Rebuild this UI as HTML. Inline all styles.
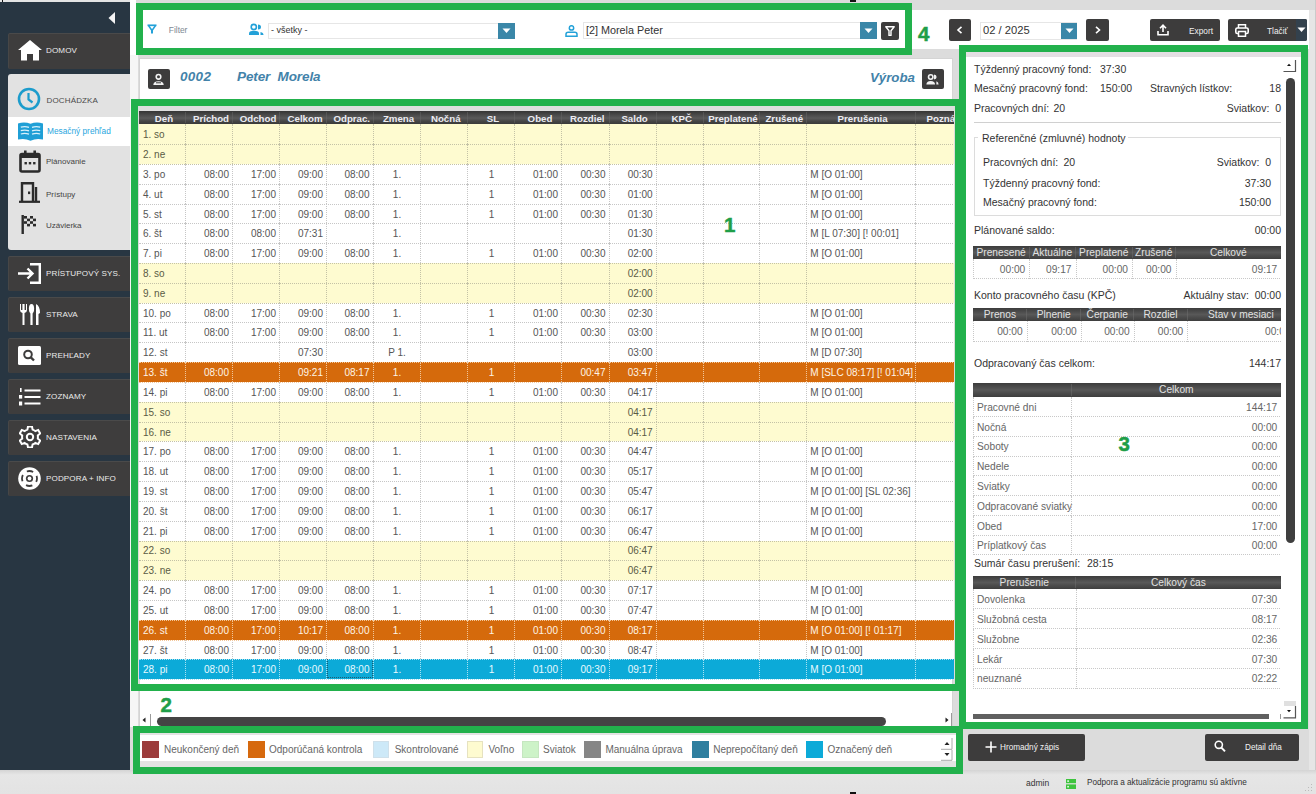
<!DOCTYPE html>
<html><head><meta charset="utf-8"><title>Dochádzka</title>
<style>
html,body{margin:0;padding:0;}
body{width:1316px;height:794px;overflow:hidden;position:relative;font-family:'Liberation Sans', sans-serif;background:#dcdcdc;}
div,svg{box-sizing:content-box;}
</style></head><body>
<div style="position:absolute;left:0;top:0;width:1316px;height:794px;background:#dcdcdc"></div>
<div style="position:absolute;left:130px;top:10px;width:1179px;height:39px;background:#fff"></div>
<div style="position:absolute;left:130px;top:0px;width:6px;height:58px;background:#fff"></div>
<div style="position:absolute;left:1309px;top:10px;width:6px;height:760px;background:#e6e6e6"></div>
<div style="position:absolute;left:1315px;top:0px;width:1px;height:770px;background:#cbcbcb"></div>
<div style="position:absolute;left:0px;top:0px;width:130px;height:2px;background:#e4e4e4"></div>
<div style="position:absolute;left:0px;top:0px;width:3px;height:3px;border-right:1px solid #111;border-bottom:1px solid #111;box-sizing:border-box"></div>
<div style="position:absolute;left:0px;top:2px;width:130px;height:768px;background:#283642"></div>
<svg style="position:absolute;left:108px;top:12px" width="8" height="12"><path d="M7 0 L7 12 L0.5 6 Z" fill="#f4f4f4"/></svg>
<div style="position:absolute;left:8px;top:33px;width:122px;height:36px;background:#3e3d3d;border-top:1px solid #4a4a4a;border-left:1px solid #474747;box-sizing:border-box;border-radius:2px 0 0 2px"></div>
<svg style="position:absolute;left:18px;top:40px" width="24" height="21" viewBox="0 0 24 21"><path d="M12 0 L24 10 L21 10 L21 20.5 L15 20.5 L15 14 L9 14 L9 20.5 L3 20.5 L3 10 L0 10 Z" fill="#fff"/></svg>
<div style="position:absolute;top:47.34px;font-size:8.1px;line-height:8.1px;color:#ebebeb;white-space:nowrap;left:46px;letter-spacing:0.1px">DOMOV</div>
<div style="position:absolute;left:8px;top:74px;width:122px;height:176px;background:#e2e2e2;border-radius:3px 0 0 3px"></div>
<div style="position:absolute;left:8px;top:117px;width:122px;height:29px;background:#ffffff"></div>
<svg style="position:absolute;left:17px;top:87px" width="24" height="24" viewBox="0 0 24 24"><circle cx="12" cy="12" r="10" fill="none" stroke="#1c9ccc" stroke-width="2.6"/><path d="M11.5 6 L11.5 12.5 L15.5 15.5" fill="none" stroke="#1c9ccc" stroke-width="2.2"/></svg>
<div style="position:absolute;top:96.83px;font-size:8px;line-height:8px;color:#4a4a4a;white-space:nowrap;left:46.5px;letter-spacing:0.15px">DOCHÁDZKA</div>
<svg style="position:absolute;left:18px;top:122px" width="25" height="19" viewBox="0 0 25 19"><path d="M0 1.5 Q6.5 -0.6 12.5 1.8 Q18.5 -0.6 25 1.5 L25 17.6 Q18.5 15.8 12.5 18.8 Q6.5 15.8 0 17.6 Z" fill="#1f9fd6"/><path d="M2.8 5.2 Q7 4 11 5.4 M2.8 8.6 Q7 7.4 11 8.8 M2.8 12 Q7 10.8 11 12.2 M14 5.4 Q18 4 22.2 5.2 M14 8.8 Q18 7.4 22.2 8.6 M14 12.2 Q18 10.8 22.2 12" stroke="#d9f1fb" stroke-width="1.3" fill="none"/></svg>
<div style="position:absolute;top:126.97px;font-size:8.3px;line-height:8.3px;color:#2aa6de;white-space:nowrap;left:47px;">Mesačný prehľad</div>
<svg style="position:absolute;left:19px;top:150px" width="22" height="23" viewBox="0 0 22 23"><rect x="1.5" y="4" width="19" height="17.5" rx="1.5" fill="none" stroke="#2b2b2b" stroke-width="2.6"/><rect x="1.5" y="4" width="19" height="4" fill="#2b2b2b"/><rect x="5" y="0.5" width="2.6" height="5" fill="#2b2b2b"/><rect x="14.4" y="0.5" width="2.6" height="5" fill="#2b2b2b"/><rect x="5.5" y="12" width="2.4" height="2.4" fill="#2b2b2b"/><rect x="9.8" y="12" width="2.4" height="2.4" fill="#2b2b2b"/><rect x="14.1" y="12" width="2.4" height="2.4" fill="#2b2b2b"/></svg>
<div style="position:absolute;top:158.23px;font-size:8px;line-height:8px;color:#444;white-space:nowrap;left:46px;">Plánovanie</div>
<svg style="position:absolute;left:19px;top:182px" width="22" height="21" viewBox="0 0 22 21"><path d="M3 20 L3 1.3 L14 1.3 L14 20" fill="none" stroke="#2b2b2b" stroke-width="2.4"/><path d="M17 5 L17 20" stroke="#2b2b2b" stroke-width="2.4"/><path d="M0 19.8 L21 19.8" stroke="#2b2b2b" stroke-width="2.2"/><rect x="9" y="9.5" width="2.2" height="2.6" fill="#2b2b2b"/></svg>
<div style="position:absolute;top:191.23px;font-size:8px;line-height:8px;color:#444;white-space:nowrap;left:46px;">Prístupy</div>
<svg style="position:absolute;left:21px;top:215px" width="17" height="19" viewBox="0 0 17 19"><rect x="0.5" y="0" width="2.4" height="19" fill="#2b2b2b"/><g fill="#2b2b2b"><rect x="3" y="1" width="3" height="2.6"/><rect x="9" y="1" width="3" height="2.6"/><rect x="6" y="3.6" width="3" height="2.6"/><rect x="12" y="3.6" width="3" height="2.6"/><rect x="3" y="6.2" width="3" height="2.6"/><rect x="9" y="6.2" width="3" height="2.6"/><rect x="6" y="8.8" width="3" height="2.6"/><rect x="12" y="8.8" width="3" height="2.6"/></g></svg>
<div style="position:absolute;top:222.23px;font-size:8px;line-height:8px;color:#444;white-space:nowrap;left:46px;">Uzávierka</div>
<div style="position:absolute;left:8px;top:256px;width:122px;height:35px;background:#3e3d3d;border-top:1px solid #4a4a4a;border-left:1px solid #474747;box-sizing:border-box;border-radius:2px 0 0 2px"></div>
<svg style="position:absolute;left:18px;top:263px" width="24" height="21" viewBox="0 0 24 21"><path d="M12 1.2 L21.8 1.2 L21.8 19.8 L12 19.8" fill="none" stroke="#fff" stroke-width="2.4"/><path d="M0 10.5 L14 10.5 M9.5 5.5 L14.5 10.5 L9.5 15.5" fill="none" stroke="#fff" stroke-width="2.4"/></svg>
<div style="position:absolute;top:269.84px;font-size:8.1px;line-height:8.1px;color:#ebebeb;white-space:nowrap;left:46px;letter-spacing:0.1px">PRÍSTUPOVÝ SYS.</div>
<div style="position:absolute;left:8px;top:297px;width:122px;height:35px;background:#3e3d3d;border-top:1px solid #4a4a4a;border-left:1px solid #474747;box-sizing:border-box;border-radius:2px 0 0 2px"></div>
<svg style="position:absolute;left:19px;top:304px" width="22" height="21" viewBox="0 0 22 21"><path d="M1 0 L1 6 Q1 8.5 3.5 9 L3.5 21 L5.5 21 L5.5 9 Q8 8.5 8 6 L8 0 L7 0 L7 6 L5.6 6 L5.6 0 L3.4 0 L3.4 6 L2 6 L2 0 Z" fill="#fff"/><ellipse cx="12.5" cy="4.8" rx="2.6" ry="4.8" fill="#fff"/><rect x="11.4" y="8" width="2.2" height="13" fill="#fff"/><path d="M17 0 Q21 2 21 9 L19.5 10 L19.5 21 L17 21 Z" fill="#fff"/></svg>
<div style="position:absolute;top:310.84px;font-size:8.1px;line-height:8.1px;color:#ebebeb;white-space:nowrap;left:46px;letter-spacing:0.1px">STRAVA</div>
<div style="position:absolute;left:8px;top:338px;width:122px;height:35px;background:#3e3d3d;border-top:1px solid #4a4a4a;border-left:1px solid #474747;box-sizing:border-box;border-radius:2px 0 0 2px"></div>
<svg style="position:absolute;left:18px;top:346px" width="23" height="19" viewBox="0 0 23 19"><rect x="0" y="0" width="23" height="19" rx="1.5" fill="#fff"/><circle cx="10" cy="8.5" r="3.8" fill="none" stroke="#3e3d3d" stroke-width="2"/><path d="M12.8 11.3 L16 14.5" stroke="#3e3d3d" stroke-width="2.4"/></svg>
<div style="position:absolute;top:351.84px;font-size:8.1px;line-height:8.1px;color:#ebebeb;white-space:nowrap;left:46px;letter-spacing:0.1px">PREHĽADY</div>
<div style="position:absolute;left:8px;top:379px;width:122px;height:35px;background:#3e3d3d;border-top:1px solid #4a4a4a;border-left:1px solid #474747;box-sizing:border-box;border-radius:2px 0 0 2px"></div>
<svg style="position:absolute;left:19px;top:388px" width="22" height="18" viewBox="0 0 22 18"><g fill="#fff"><rect x="5.5" y="1.5" width="16" height="2"/><rect x="5.5" y="8" width="16" height="2"/><rect x="5.5" y="14.5" width="16" height="2"/><rect x="1" y="0" width="1.6" height="4"/><rect x="0" y="7" width="3.2" height="3.6"/><rect x="0" y="13.5" width="3.2" height="4"/></g></svg>
<div style="position:absolute;top:392.84px;font-size:8.1px;line-height:8.1px;color:#ebebeb;white-space:nowrap;left:46px;letter-spacing:0.1px">ZOZNAMY</div>
<div style="position:absolute;left:8px;top:420px;width:122px;height:35px;background:#3e3d3d;border-top:1px solid #4a4a4a;border-left:1px solid #474747;box-sizing:border-box;border-radius:2px 0 0 2px"></div>
<svg style="position:absolute;left:19px;top:426px" width="22" height="22" viewBox="0 0 22 22"><g transform="translate(11 11)"><path d="M-2 -10.5 L2 -10.5 L2.6 -7.4 Q4.2 -6.8 5.3 -5.9 L8.2 -7.1 L10.2 -3.6 L7.8 -1.6 Q8 0 7.8 1.6 L10.2 3.6 L8.2 7.1 L5.3 5.9 Q4.2 6.8 2.6 7.4 L2 10.5 L-2 10.5 L-2.6 7.4 Q-4.2 6.8 -5.3 5.9 L-8.2 7.1 L-10.2 3.6 L-7.8 1.6 Q-8 0 -7.8 -1.6 L-10.2 -3.6 L-8.2 -7.1 L-5.3 -5.9 Q-4.2 -6.8 -2.6 -7.4 Z" fill="none" stroke="#fff" stroke-width="2"/><circle r="3.2" fill="none" stroke="#fff" stroke-width="2"/></g></svg>
<div style="position:absolute;top:433.84px;font-size:8.1px;line-height:8.1px;color:#ebebeb;white-space:nowrap;left:46px;letter-spacing:0.1px">NASTAVENIA</div>
<div style="position:absolute;left:8px;top:461px;width:122px;height:35px;background:#3e3d3d;border-top:1px solid #4a4a4a;border-left:1px solid #474747;box-sizing:border-box;border-radius:2px 0 0 2px"></div>
<svg style="position:absolute;left:18px;top:467px" width="23" height="23" viewBox="0 0 23 23"><circle cx="11.5" cy="11.5" r="11.3" fill="#fff"/><circle cx="11.5" cy="11.5" r="7.5" fill="none" stroke="#3e3d3d" stroke-width="1.8" stroke-dasharray="6.5 5.3" stroke-dashoffset="3"/><circle cx="11.5" cy="11.5" r="3.6" fill="#3e3d3d"/><circle cx="11.5" cy="11.5" r="1.9" fill="#fff"/></svg>
<div style="position:absolute;top:474.84px;font-size:8.1px;line-height:8.1px;color:#ebebeb;white-space:nowrap;left:46px;letter-spacing:0.1px">PODPORA + INFO</div>
<svg style="position:absolute;left:147px;top:24px" width="10" height="10" viewBox="0 0 10 10"><path d="M0.5 1.3 L9.5 1.3" stroke="#23a1d8" stroke-width="1.7"/><path d="M1.5 1.5 L4.2 5.5 L5.8 5.5 L8.5 1.5" fill="none" stroke="#23a1d8" stroke-width="1.5"/><path d="M5 5 L5 9.5" stroke="#23a1d8" stroke-width="2"/></svg>
<div style="position:absolute;top:25.89px;font-size:8.4px;line-height:8.4px;color:#7d8893;white-space:nowrap;left:168.8px;">Filter</div>
<svg style="position:absolute;left:249px;top:23px" width="15" height="13" viewBox="0 0 15 13"><circle cx="4.8" cy="4" r="2.6" fill="none" stroke="#23a1d8" stroke-width="1.6"/><path d="M0 12 L0 10.5 Q0 8 3 8 L7 8 Q10 8 10 10.5 L10 12 Z" fill="#23a1d8"/><path d="M9 1.5 Q12 1.5 12 4 Q12 6.5 9 6.5 Z" fill="#23a1d8"/><path d="M11.5 9 Q14.5 9.5 14.5 12 L11.5 12 Z" fill="#23a1d8"/></svg>
<div style="position:absolute;left:268px;top:23px;width:247px;height:16px;background:#fff;border:1px solid #e6e6e6;box-sizing:border-box"></div>
<div style="position:absolute;top:26.38px;font-size:9px;line-height:9px;color:#333;white-space:nowrap;left:271px;">- všetky -</div>
<div style="position:absolute;left:498px;top:23px;width:17px;height:16px;background:#3a87a8"></div>
<svg style="position:absolute;left:502px;top:28px" width="9" height="6"><path d="M0.5 0.5 L8.5 0.5 L4.5 5 Z" fill="#fff"/></svg>
<svg style="position:absolute;left:565px;top:25px" width="13" height="12" viewBox="0 0 13 12"><circle cx="6.5" cy="2.9" r="2.2" fill="none" stroke="#23a1d8" stroke-width="1.5"/><path d="M1 11.2 L1 9.2 Q1 7.2 3.2 7.2 L9.8 7.2 Q12 7.2 12 9.2 L12 11.2 Z" fill="none" stroke="#23a1d8" stroke-width="1.5"/></svg>
<div style="position:absolute;left:583px;top:22px;width:294px;height:17px;background:#fff;border:1px solid #e6e6e6;box-sizing:border-box"></div>
<div style="position:absolute;top:25.46px;font-size:10.8px;line-height:10.8px;color:#333;white-space:nowrap;left:586px;">[2] Morela Peter</div>
<div style="position:absolute;left:860px;top:22px;width:17px;height:17px;background:#3a87a8"></div>
<svg style="position:absolute;left:864px;top:28px" width="9" height="6"><path d="M0.5 0.5 L8.5 0.5 L4.5 5 Z" fill="#fff"/></svg>
<div style="position:absolute;left:881px;top:22px;width:18px;height:18px;background:#3d3c3c;border-radius:2px"></div>
<svg style="position:absolute;left:885px;top:26px" width="10" height="10" viewBox="0 0 10 10"><path d="M0.8 0.8 L9.2 0.8 L6 4.8 L6 9.5 L4 9.5 L4 4.8 Z" fill="none" stroke="#fff" stroke-width="1.4" stroke-linejoin="round"/></svg>
<div style="position:absolute;left:949px;top:19px;width:22px;height:22px;background:#3d3c3c;border-radius:2px"></div>
<svg style="position:absolute;left:956px;top:26px" width="8" height="8"><path d="M5.5 0.8 L2 4 L5.5 7.2" fill="none" stroke="#fff" stroke-width="1.6"/></svg>
<div style="position:absolute;left:980px;top:22px;width:97px;height:18px;background:#fff;border:1px solid #e6e6e6;box-sizing:border-box"></div>
<div style="position:absolute;top:25.12px;font-size:11.2px;line-height:11.2px;color:#333;white-space:nowrap;left:983px;">02 / 2025</div>
<div style="position:absolute;left:1061px;top:22.5px;width:16px;height:16.5px;background:#3a87a8"></div>
<svg style="position:absolute;left:1065px;top:28px" width="9" height="6"><path d="M0.5 0.5 L8.5 0.5 L4.5 5 Z" fill="#fff"/></svg>
<div style="position:absolute;left:1086px;top:19px;width:22.5px;height:22px;background:#3d3c3c;border-radius:2px"></div>
<svg style="position:absolute;left:1094px;top:26px" width="8" height="8"><path d="M2 0.8 L5.5 4 L2 7.2" fill="none" stroke="#fff" stroke-width="1.6"/></svg>
<div style="position:absolute;left:1150px;top:19px;width:70px;height:22px;background:#3d3c3c;border-radius:2px"></div>
<svg style="position:absolute;left:1157px;top:24px" width="12" height="12" viewBox="0 0 12 12"><path d="M6 8 L6 1.5 M3 4.3 L6 1.2 L9 4.3" fill="none" stroke="#fff" stroke-width="1.6"/><path d="M1 7 L1 10.8 L11 10.8 L11 7" fill="none" stroke="#fff" stroke-width="1.6"/></svg>
<div style="position:absolute;top:26.97px;font-size:8.3px;line-height:8.3px;color:#f0f0f0;white-space:nowrap;left:1189px;">Export</div>
<div style="position:absolute;left:1228px;top:19px;width:79px;height:22px;background:#3d3c3c;border-radius:2px"></div>
<div style="position:absolute;left:1296px;top:19px;width:11px;height:22px;background:#33414d;border-radius:0 2px 2px 0"></div>
<svg style="position:absolute;left:1235px;top:24px" width="14" height="13" viewBox="0 0 14 13"><path d="M3.5 4 L3.5 0.8 L10.5 0.8 L10.5 4" fill="none" stroke="#fff" stroke-width="1.5"/><rect x="0.8" y="4" width="12.4" height="5.5" rx="1.5" fill="none" stroke="#fff" stroke-width="1.6"/><rect x="3.5" y="7.5" width="7" height="4.8" fill="#3d3c3c" stroke="#fff" stroke-width="1.5"/></svg>
<div style="position:absolute;top:26.97px;font-size:8.3px;line-height:8.3px;color:#f0f0f0;white-space:nowrap;left:1267px;">Tlačiť</div>
<svg style="position:absolute;left:1297px;top:27px" width="9" height="6"><path d="M0.5 0.5 L8.5 0.5 L4.5 5 Z" fill="#fff"/></svg>
<div style="position:absolute;left:139px;top:58px;width:814px;height:672px;background:#fff;border:1px solid #d4d4d4;box-sizing:border-box"></div>
<div style="position:absolute;left:130px;top:55px;width:8px;height:672px;background:#f6f6f6"></div>
<div style="position:absolute;left:148px;top:69px;width:22px;height:20px;background:#3d3c3c;border-radius:2px"></div>
<svg style="position:absolute;left:148px;top:69px" width="22" height="20" viewBox="0 0 22 20"><circle cx="10.5" cy="7.8" r="2.3" fill="none" stroke="#f2f2f2" stroke-width="1.6"/><path d="M5.3 16 Q5.3 12.2 10.5 12.2 Q15.7 12.2 15.7 16 Z" fill="#f2f2f2"/><rect x="8" y="13.3" width="5" height="1" fill="#3d3c3c"/></svg>
<div style="position:absolute;top:70.37px;font-size:13.5px;line-height:13.5px;color:#4282a9;white-space:nowrap;font-weight:bold;font-style:italic;left:180px;letter-spacing:0.3px">0002</div>
<div style="position:absolute;top:70.37px;font-size:13.5px;line-height:13.5px;color:#4282a9;white-space:nowrap;font-weight:bold;font-style:italic;left:237px;letter-spacing:-0.1px">Peter&nbsp;&nbsp;Morela</div>
<div style="position:absolute;top:70.54px;font-size:13.3px;line-height:13.3px;color:#4282a9;white-space:nowrap;font-weight:bold;font-style:italic;right:401px;">Výroba</div>
<div style="position:absolute;left:922px;top:69px;width:22px;height:20px;background:#3d3c3c;border-radius:2px"></div>
<svg style="position:absolute;left:922px;top:69px" width="22" height="20" viewBox="0 0 22 20"><circle cx="8.7" cy="8" r="2.2" fill="none" stroke="#f2f2f2" stroke-width="1.6"/><path d="M12 5.6 Q14.6 5.8 14.6 8 Q14.6 10.2 12 10.4 Z" fill="#f2f2f2"/><path d="M4.4 15.6 Q4.4 12 8.7 12 Q13 12 13 15.6 Z" fill="#f2f2f2"/><path d="M14.4 12.2 Q16.6 12.8 16.6 15.6 L14.4 15.6 Z" fill="#f2f2f2"/></svg>
<div style="position:absolute;left:137px;top:104px;width:817px;height:7px;background:#dedede"></div>
<div style="position:absolute;left:139px;top:0;width:814.5px;height:794px;overflow:hidden;z-index:2">
<div style="position:absolute;left:0px;top:111px;width:900px;height:13.299999999999997px;background:linear-gradient(to bottom,#353535 0%,#4d4d4d 35%,#5a5a5a 55%,#444 80%,#3a3a3a 100%)"></div>
<div style="position:absolute;left:1.5px;top:111.7px;width:47px;height:13.299999999999997px;line-height:13.299999999999997px;text-align:center;font-size:9.7px;font-weight:bold;color:#ececf2;white-space:nowrap;overflow:hidden">Deň</div>
<div style="position:absolute;left:46px;top:112px;width:1px;height:11.299999999999997px;background:#6a6a6a;opacity:0.45"></div>
<div style="position:absolute;left:48.5px;top:111.7px;width:47px;height:13.299999999999997px;line-height:13.299999999999997px;text-align:center;font-size:9.7px;font-weight:bold;color:#ececf2;white-space:nowrap;overflow:hidden">Príchod</div>
<div style="position:absolute;left:93px;top:112px;width:1px;height:11.299999999999997px;background:#6a6a6a;opacity:0.45"></div>
<div style="position:absolute;left:95.5px;top:111.7px;width:47px;height:13.299999999999997px;line-height:13.299999999999997px;text-align:center;font-size:9.7px;font-weight:bold;color:#ececf2;white-space:nowrap;overflow:hidden">Odchod</div>
<div style="position:absolute;left:140px;top:112px;width:1px;height:11.299999999999997px;background:#6a6a6a;opacity:0.45"></div>
<div style="position:absolute;left:142.5px;top:111.7px;width:47px;height:13.299999999999997px;line-height:13.299999999999997px;text-align:center;font-size:9.7px;font-weight:bold;color:#ececf2;white-space:nowrap;overflow:hidden">Celkom</div>
<div style="position:absolute;left:187px;top:112px;width:1px;height:11.299999999999997px;background:#6a6a6a;opacity:0.45"></div>
<div style="position:absolute;left:189.5px;top:111.7px;width:46.5px;height:13.299999999999997px;line-height:13.299999999999997px;text-align:center;font-size:9.7px;font-weight:bold;color:#ececf2;white-space:nowrap;overflow:hidden">Odprac.</div>
<div style="position:absolute;left:234px;top:112px;width:1px;height:11.299999999999997px;background:#6a6a6a;opacity:0.45"></div>
<div style="position:absolute;left:236.0px;top:111.7px;width:47.0px;height:13.299999999999997px;line-height:13.299999999999997px;text-align:center;font-size:9.7px;font-weight:bold;color:#ececf2;white-space:nowrap;overflow:hidden">Zmena</div>
<div style="position:absolute;left:281px;top:112px;width:1px;height:11.299999999999997px;background:#6a6a6a;opacity:0.45"></div>
<div style="position:absolute;left:283.0px;top:111.7px;width:47.5px;height:13.299999999999997px;line-height:13.299999999999997px;text-align:center;font-size:9.7px;font-weight:bold;color:#ececf2;white-space:nowrap;overflow:hidden">Nočná</div>
<div style="position:absolute;left:328px;top:112px;width:1px;height:11.299999999999997px;background:#6a6a6a;opacity:0.45"></div>
<div style="position:absolute;left:330.5px;top:111.7px;width:47px;height:13.299999999999997px;line-height:13.299999999999997px;text-align:center;font-size:9.7px;font-weight:bold;color:#ececf2;white-space:nowrap;overflow:hidden">SL</div>
<div style="position:absolute;left:375px;top:112px;width:1px;height:11.299999999999997px;background:#6a6a6a;opacity:0.45"></div>
<div style="position:absolute;left:377.5px;top:111.7px;width:47px;height:13.299999999999997px;line-height:13.299999999999997px;text-align:center;font-size:9.7px;font-weight:bold;color:#ececf2;white-space:nowrap;overflow:hidden">Obed</div>
<div style="position:absolute;left:422px;top:112px;width:1px;height:11.299999999999997px;background:#6a6a6a;opacity:0.45"></div>
<div style="position:absolute;left:424.5px;top:111.7px;width:47.5px;height:13.299999999999997px;line-height:13.299999999999997px;text-align:center;font-size:9.7px;font-weight:bold;color:#ececf2;white-space:nowrap;overflow:hidden">Rozdiel</div>
<div style="position:absolute;left:470px;top:112px;width:1px;height:11.299999999999997px;background:#6a6a6a;opacity:0.45"></div>
<div style="position:absolute;left:472.0px;top:111.7px;width:47.200000000000045px;height:13.299999999999997px;line-height:13.299999999999997px;text-align:center;font-size:9.7px;font-weight:bold;color:#ececf2;white-space:nowrap;overflow:hidden">Saldo</div>
<div style="position:absolute;left:517px;top:112px;width:1px;height:11.299999999999997px;background:#6a6a6a;opacity:0.45"></div>
<div style="position:absolute;left:519.2px;top:111.7px;width:47.0px;height:13.299999999999997px;line-height:13.299999999999997px;text-align:center;font-size:9.7px;font-weight:bold;color:#ececf2;white-space:nowrap;overflow:hidden">KPČ</div>
<div style="position:absolute;left:564px;top:112px;width:1px;height:11.299999999999997px;background:#6a6a6a;opacity:0.45"></div>
<div style="position:absolute;left:566.2px;top:111.7px;width:55.59999999999991px;height:13.299999999999997px;line-height:13.299999999999997px;text-align:center;font-size:9.7px;font-weight:bold;color:#ececf2;white-space:nowrap;overflow:hidden">Preplatené</div>
<div style="position:absolute;left:620px;top:112px;width:1px;height:11.299999999999997px;background:#6a6a6a;opacity:0.45"></div>
<div style="position:absolute;left:621.8px;top:111.7px;width:47.0px;height:13.299999999999997px;line-height:13.299999999999997px;text-align:center;font-size:9.7px;font-weight:bold;color:#ececf2;white-space:nowrap;overflow:hidden">Zrušené</div>
<div style="position:absolute;left:667px;top:112px;width:1px;height:11.299999999999997px;background:#6a6a6a;opacity:0.45"></div>
<div style="position:absolute;left:668.8px;top:111.7px;width:109.70000000000005px;height:13.299999999999997px;line-height:13.299999999999997px;text-align:center;font-size:9.7px;font-weight:bold;color:#ececf2;white-space:nowrap;overflow:hidden">Prerušenia</div>
<div style="position:absolute;left:776px;top:112px;width:1px;height:11.299999999999997px;background:#6a6a6a;opacity:0.45"></div>
<div style="position:absolute;left:778.5px;top:111.7px;width:66px;height:13.299999999999997px;line-height:13.299999999999997px;text-align:center;font-size:9.7px;font-weight:bold;color:#ececf2;white-space:nowrap;overflow:hidden">Poznámka</div>
<div style="position:absolute;left:0;top:124px;width:900px;height:20px;background:#fefbd0"></div>
<div style="position:absolute;left:4px;top:130.23px;font-size:10px;line-height:10px;color:#5b5b45;white-space:nowrap">1. so</div>
<div style="position:absolute;left:46px;top:124px;width:0;height:20px;border-left:1px dotted #c4c2a6"></div>
<div style="position:absolute;left:93px;top:124px;width:0;height:20px;border-left:1px dotted #c4c2a6"></div>
<div style="position:absolute;left:140px;top:124px;width:0;height:20px;border-left:1px dotted #c4c2a6"></div>
<div style="position:absolute;left:187px;top:124px;width:0;height:20px;border-left:1px dotted #c4c2a6"></div>
<div style="position:absolute;left:234px;top:124px;width:0;height:20px;border-left:1px dotted #c4c2a6"></div>
<div style="position:absolute;left:281px;top:124px;width:0;height:20px;border-left:1px dotted #c4c2a6"></div>
<div style="position:absolute;left:328px;top:124px;width:0;height:20px;border-left:1px dotted #c4c2a6"></div>
<div style="position:absolute;left:375px;top:124px;width:0;height:20px;border-left:1px dotted #c4c2a6"></div>
<div style="position:absolute;left:422px;top:124px;width:0;height:20px;border-left:1px dotted #c4c2a6"></div>
<div style="position:absolute;left:470px;top:124px;width:0;height:20px;border-left:1px dotted #c4c2a6"></div>
<div style="position:absolute;left:517px;top:124px;width:0;height:20px;border-left:1px dotted #c4c2a6"></div>
<div style="position:absolute;left:564px;top:124px;width:0;height:20px;border-left:1px dotted #c4c2a6"></div>
<div style="position:absolute;left:620px;top:124px;width:0;height:20px;border-left:1px dotted #c4c2a6"></div>
<div style="position:absolute;left:667px;top:124px;width:0;height:20px;border-left:1px dotted #c4c2a6"></div>
<div style="position:absolute;left:776px;top:124px;width:0;height:20px;border-left:1px dotted #c4c2a6"></div>
<div style="position:absolute;z-index:1;left:0;top:144px;width:900px;height:0;border-top:1px dotted #c4c2a6"></div>
<div style="position:absolute;left:0;top:144px;width:900px;height:20px;background:#fefbd0"></div>
<div style="position:absolute;left:4px;top:150.06px;font-size:10px;line-height:10px;color:#5b5b45;white-space:nowrap">2. ne</div>
<div style="position:absolute;left:46px;top:144px;width:0;height:20px;border-left:1px dotted #c4c2a6"></div>
<div style="position:absolute;left:93px;top:144px;width:0;height:20px;border-left:1px dotted #c4c2a6"></div>
<div style="position:absolute;left:140px;top:144px;width:0;height:20px;border-left:1px dotted #c4c2a6"></div>
<div style="position:absolute;left:187px;top:144px;width:0;height:20px;border-left:1px dotted #c4c2a6"></div>
<div style="position:absolute;left:234px;top:144px;width:0;height:20px;border-left:1px dotted #c4c2a6"></div>
<div style="position:absolute;left:281px;top:144px;width:0;height:20px;border-left:1px dotted #c4c2a6"></div>
<div style="position:absolute;left:328px;top:144px;width:0;height:20px;border-left:1px dotted #c4c2a6"></div>
<div style="position:absolute;left:375px;top:144px;width:0;height:20px;border-left:1px dotted #c4c2a6"></div>
<div style="position:absolute;left:422px;top:144px;width:0;height:20px;border-left:1px dotted #c4c2a6"></div>
<div style="position:absolute;left:470px;top:144px;width:0;height:20px;border-left:1px dotted #c4c2a6"></div>
<div style="position:absolute;left:517px;top:144px;width:0;height:20px;border-left:1px dotted #c4c2a6"></div>
<div style="position:absolute;left:564px;top:144px;width:0;height:20px;border-left:1px dotted #c4c2a6"></div>
<div style="position:absolute;left:620px;top:144px;width:0;height:20px;border-left:1px dotted #c4c2a6"></div>
<div style="position:absolute;left:667px;top:144px;width:0;height:20px;border-left:1px dotted #c4c2a6"></div>
<div style="position:absolute;left:776px;top:144px;width:0;height:20px;border-left:1px dotted #c4c2a6"></div>
<div style="position:absolute;z-index:1;left:0;top:164px;width:900px;height:0;border-top:1px dotted #c4c2a6"></div>
<div style="position:absolute;left:0;top:164px;width:900px;height:20px;background:#ffffff"></div>
<div style="position:absolute;left:4px;top:169.88px;font-size:10px;line-height:10px;color:#555555;white-space:nowrap">3. po</div>
<div style="position:absolute;left:46px;top:164px;width:0;height:20px;border-left:1px dotted #c6c6c6"></div>
<div style="position:absolute;left:47px;width:43px;text-align:right;top:169.88px;font-size:10px;line-height:10px;color:#555555;white-space:nowrap">08:00</div>
<div style="position:absolute;left:93px;top:164px;width:0;height:20px;border-left:1px dotted #c6c6c6"></div>
<div style="position:absolute;left:94px;width:43px;text-align:right;top:169.88px;font-size:10px;line-height:10px;color:#555555;white-space:nowrap">17:00</div>
<div style="position:absolute;left:140px;top:164px;width:0;height:20px;border-left:1px dotted #c6c6c6"></div>
<div style="position:absolute;left:141px;width:43px;text-align:right;top:169.88px;font-size:10px;line-height:10px;color:#555555;white-space:nowrap">09:00</div>
<div style="position:absolute;left:187px;top:164px;width:0;height:20px;border-left:1px dotted #c6c6c6"></div>
<div style="position:absolute;left:188px;width:42.5px;text-align:right;top:169.88px;font-size:10px;line-height:10px;color:#555555;white-space:nowrap">08:00</div>
<div style="position:absolute;left:234px;top:164px;width:0;height:20px;border-left:1px dotted #c6c6c6"></div>
<div style="position:absolute;left:234.5px;width:47.0px;text-align:center;top:169.88px;font-size:10px;line-height:10px;color:#555555;white-space:nowrap">1.</div>
<div style="position:absolute;left:281px;top:164px;width:0;height:20px;border-left:1px dotted #c6c6c6"></div>
<div style="position:absolute;left:328px;top:164px;width:0;height:20px;border-left:1px dotted #c6c6c6"></div>
<div style="position:absolute;left:329px;width:47px;text-align:center;top:169.88px;font-size:10px;line-height:10px;color:#555555;white-space:nowrap">1</div>
<div style="position:absolute;left:375px;top:164px;width:0;height:20px;border-left:1px dotted #c6c6c6"></div>
<div style="position:absolute;left:376px;width:43px;text-align:right;top:169.88px;font-size:10px;line-height:10px;color:#555555;white-space:nowrap">01:00</div>
<div style="position:absolute;left:422px;top:164px;width:0;height:20px;border-left:1px dotted #c6c6c6"></div>
<div style="position:absolute;left:423px;width:43.5px;text-align:right;top:169.88px;font-size:10px;line-height:10px;color:#555555;white-space:nowrap">00:30</div>
<div style="position:absolute;left:470px;top:164px;width:0;height:20px;border-left:1px dotted #c6c6c6"></div>
<div style="position:absolute;left:470.5px;width:43.200000000000045px;text-align:right;top:169.88px;font-size:10px;line-height:10px;color:#555555;white-space:nowrap">00:30</div>
<div style="position:absolute;left:517px;top:164px;width:0;height:20px;border-left:1px dotted #c6c6c6"></div>
<div style="position:absolute;left:564px;top:164px;width:0;height:20px;border-left:1px dotted #c6c6c6"></div>
<div style="position:absolute;left:620px;top:164px;width:0;height:20px;border-left:1px dotted #c6c6c6"></div>
<div style="position:absolute;left:667px;top:164px;width:0;height:20px;border-left:1px dotted #c6c6c6"></div>
<div style="position:absolute;left:671.3px;top:169.88px;font-size:10px;line-height:10px;color:#555555;white-space:nowrap">M [O 01:00]</div>
<div style="position:absolute;left:776px;top:164px;width:0;height:20px;border-left:1px dotted #c6c6c6"></div>
<div style="position:absolute;z-index:1;left:0;top:184px;width:900px;height:0;border-top:1px dotted #c6c6c6"></div>
<div style="position:absolute;left:0;top:184px;width:900px;height:20px;background:#ffffff"></div>
<div style="position:absolute;left:4px;top:189.69px;font-size:10px;line-height:10px;color:#555555;white-space:nowrap">4. ut</div>
<div style="position:absolute;left:46px;top:184px;width:0;height:20px;border-left:1px dotted #c6c6c6"></div>
<div style="position:absolute;left:47px;width:43px;text-align:right;top:189.69px;font-size:10px;line-height:10px;color:#555555;white-space:nowrap">08:00</div>
<div style="position:absolute;left:93px;top:184px;width:0;height:20px;border-left:1px dotted #c6c6c6"></div>
<div style="position:absolute;left:94px;width:43px;text-align:right;top:189.69px;font-size:10px;line-height:10px;color:#555555;white-space:nowrap">17:00</div>
<div style="position:absolute;left:140px;top:184px;width:0;height:20px;border-left:1px dotted #c6c6c6"></div>
<div style="position:absolute;left:141px;width:43px;text-align:right;top:189.69px;font-size:10px;line-height:10px;color:#555555;white-space:nowrap">09:00</div>
<div style="position:absolute;left:187px;top:184px;width:0;height:20px;border-left:1px dotted #c6c6c6"></div>
<div style="position:absolute;left:188px;width:42.5px;text-align:right;top:189.69px;font-size:10px;line-height:10px;color:#555555;white-space:nowrap">08:00</div>
<div style="position:absolute;left:234px;top:184px;width:0;height:20px;border-left:1px dotted #c6c6c6"></div>
<div style="position:absolute;left:234.5px;width:47.0px;text-align:center;top:189.69px;font-size:10px;line-height:10px;color:#555555;white-space:nowrap">1.</div>
<div style="position:absolute;left:281px;top:184px;width:0;height:20px;border-left:1px dotted #c6c6c6"></div>
<div style="position:absolute;left:328px;top:184px;width:0;height:20px;border-left:1px dotted #c6c6c6"></div>
<div style="position:absolute;left:329px;width:47px;text-align:center;top:189.69px;font-size:10px;line-height:10px;color:#555555;white-space:nowrap">1</div>
<div style="position:absolute;left:375px;top:184px;width:0;height:20px;border-left:1px dotted #c6c6c6"></div>
<div style="position:absolute;left:376px;width:43px;text-align:right;top:189.69px;font-size:10px;line-height:10px;color:#555555;white-space:nowrap">01:00</div>
<div style="position:absolute;left:422px;top:184px;width:0;height:20px;border-left:1px dotted #c6c6c6"></div>
<div style="position:absolute;left:423px;width:43.5px;text-align:right;top:189.69px;font-size:10px;line-height:10px;color:#555555;white-space:nowrap">00:30</div>
<div style="position:absolute;left:470px;top:184px;width:0;height:20px;border-left:1px dotted #c6c6c6"></div>
<div style="position:absolute;left:470.5px;width:43.200000000000045px;text-align:right;top:189.69px;font-size:10px;line-height:10px;color:#555555;white-space:nowrap">01:00</div>
<div style="position:absolute;left:517px;top:184px;width:0;height:20px;border-left:1px dotted #c6c6c6"></div>
<div style="position:absolute;left:564px;top:184px;width:0;height:20px;border-left:1px dotted #c6c6c6"></div>
<div style="position:absolute;left:620px;top:184px;width:0;height:20px;border-left:1px dotted #c6c6c6"></div>
<div style="position:absolute;left:667px;top:184px;width:0;height:20px;border-left:1px dotted #c6c6c6"></div>
<div style="position:absolute;left:671.3px;top:189.69px;font-size:10px;line-height:10px;color:#555555;white-space:nowrap">M [O 01:00]</div>
<div style="position:absolute;left:776px;top:184px;width:0;height:20px;border-left:1px dotted #c6c6c6"></div>
<div style="position:absolute;z-index:1;left:0;top:204px;width:900px;height:0;border-top:1px dotted #c6c6c6"></div>
<div style="position:absolute;left:0;top:204px;width:900px;height:19px;background:#ffffff"></div>
<div style="position:absolute;left:4px;top:209.51px;font-size:10px;line-height:10px;color:#555555;white-space:nowrap">5. st</div>
<div style="position:absolute;left:46px;top:204px;width:0;height:19px;border-left:1px dotted #c6c6c6"></div>
<div style="position:absolute;left:47px;width:43px;text-align:right;top:209.51px;font-size:10px;line-height:10px;color:#555555;white-space:nowrap">08:00</div>
<div style="position:absolute;left:93px;top:204px;width:0;height:19px;border-left:1px dotted #c6c6c6"></div>
<div style="position:absolute;left:94px;width:43px;text-align:right;top:209.51px;font-size:10px;line-height:10px;color:#555555;white-space:nowrap">17:00</div>
<div style="position:absolute;left:140px;top:204px;width:0;height:19px;border-left:1px dotted #c6c6c6"></div>
<div style="position:absolute;left:141px;width:43px;text-align:right;top:209.51px;font-size:10px;line-height:10px;color:#555555;white-space:nowrap">09:00</div>
<div style="position:absolute;left:187px;top:204px;width:0;height:19px;border-left:1px dotted #c6c6c6"></div>
<div style="position:absolute;left:188px;width:42.5px;text-align:right;top:209.51px;font-size:10px;line-height:10px;color:#555555;white-space:nowrap">08:00</div>
<div style="position:absolute;left:234px;top:204px;width:0;height:19px;border-left:1px dotted #c6c6c6"></div>
<div style="position:absolute;left:234.5px;width:47.0px;text-align:center;top:209.51px;font-size:10px;line-height:10px;color:#555555;white-space:nowrap">1.</div>
<div style="position:absolute;left:281px;top:204px;width:0;height:19px;border-left:1px dotted #c6c6c6"></div>
<div style="position:absolute;left:328px;top:204px;width:0;height:19px;border-left:1px dotted #c6c6c6"></div>
<div style="position:absolute;left:329px;width:47px;text-align:center;top:209.51px;font-size:10px;line-height:10px;color:#555555;white-space:nowrap">1</div>
<div style="position:absolute;left:375px;top:204px;width:0;height:19px;border-left:1px dotted #c6c6c6"></div>
<div style="position:absolute;left:376px;width:43px;text-align:right;top:209.51px;font-size:10px;line-height:10px;color:#555555;white-space:nowrap">01:00</div>
<div style="position:absolute;left:422px;top:204px;width:0;height:19px;border-left:1px dotted #c6c6c6"></div>
<div style="position:absolute;left:423px;width:43.5px;text-align:right;top:209.51px;font-size:10px;line-height:10px;color:#555555;white-space:nowrap">00:30</div>
<div style="position:absolute;left:470px;top:204px;width:0;height:19px;border-left:1px dotted #c6c6c6"></div>
<div style="position:absolute;left:470.5px;width:43.200000000000045px;text-align:right;top:209.51px;font-size:10px;line-height:10px;color:#555555;white-space:nowrap">01:30</div>
<div style="position:absolute;left:517px;top:204px;width:0;height:19px;border-left:1px dotted #c6c6c6"></div>
<div style="position:absolute;left:564px;top:204px;width:0;height:19px;border-left:1px dotted #c6c6c6"></div>
<div style="position:absolute;left:620px;top:204px;width:0;height:19px;border-left:1px dotted #c6c6c6"></div>
<div style="position:absolute;left:667px;top:204px;width:0;height:19px;border-left:1px dotted #c6c6c6"></div>
<div style="position:absolute;left:671.3px;top:209.51px;font-size:10px;line-height:10px;color:#555555;white-space:nowrap">M [O 01:00]</div>
<div style="position:absolute;left:776px;top:204px;width:0;height:19px;border-left:1px dotted #c6c6c6"></div>
<div style="position:absolute;z-index:1;left:0;top:223px;width:900px;height:0;border-top:1px dotted #c6c6c6"></div>
<div style="position:absolute;left:0;top:223px;width:900px;height:20px;background:#ffffff"></div>
<div style="position:absolute;left:4px;top:229.33px;font-size:10px;line-height:10px;color:#555555;white-space:nowrap">6. št</div>
<div style="position:absolute;left:46px;top:223px;width:0;height:20px;border-left:1px dotted #c6c6c6"></div>
<div style="position:absolute;left:47px;width:43px;text-align:right;top:229.33px;font-size:10px;line-height:10px;color:#555555;white-space:nowrap">08:00</div>
<div style="position:absolute;left:93px;top:223px;width:0;height:20px;border-left:1px dotted #c6c6c6"></div>
<div style="position:absolute;left:94px;width:43px;text-align:right;top:229.33px;font-size:10px;line-height:10px;color:#555555;white-space:nowrap">08:00</div>
<div style="position:absolute;left:140px;top:223px;width:0;height:20px;border-left:1px dotted #c6c6c6"></div>
<div style="position:absolute;left:141px;width:43px;text-align:right;top:229.33px;font-size:10px;line-height:10px;color:#555555;white-space:nowrap">07:31</div>
<div style="position:absolute;left:187px;top:223px;width:0;height:20px;border-left:1px dotted #c6c6c6"></div>
<div style="position:absolute;left:234px;top:223px;width:0;height:20px;border-left:1px dotted #c6c6c6"></div>
<div style="position:absolute;left:234.5px;width:47.0px;text-align:center;top:229.33px;font-size:10px;line-height:10px;color:#555555;white-space:nowrap">1.</div>
<div style="position:absolute;left:281px;top:223px;width:0;height:20px;border-left:1px dotted #c6c6c6"></div>
<div style="position:absolute;left:328px;top:223px;width:0;height:20px;border-left:1px dotted #c6c6c6"></div>
<div style="position:absolute;left:375px;top:223px;width:0;height:20px;border-left:1px dotted #c6c6c6"></div>
<div style="position:absolute;left:422px;top:223px;width:0;height:20px;border-left:1px dotted #c6c6c6"></div>
<div style="position:absolute;left:470px;top:223px;width:0;height:20px;border-left:1px dotted #c6c6c6"></div>
<div style="position:absolute;left:470.5px;width:43.200000000000045px;text-align:right;top:229.33px;font-size:10px;line-height:10px;color:#555555;white-space:nowrap">01:30</div>
<div style="position:absolute;left:517px;top:223px;width:0;height:20px;border-left:1px dotted #c6c6c6"></div>
<div style="position:absolute;left:564px;top:223px;width:0;height:20px;border-left:1px dotted #c6c6c6"></div>
<div style="position:absolute;left:620px;top:223px;width:0;height:20px;border-left:1px dotted #c6c6c6"></div>
<div style="position:absolute;left:667px;top:223px;width:0;height:20px;border-left:1px dotted #c6c6c6"></div>
<div style="position:absolute;left:671.3px;top:229.33px;font-size:10px;line-height:10px;color:#555555;white-space:nowrap">M [L 07:30] [! 00:01]</div>
<div style="position:absolute;left:776px;top:223px;width:0;height:20px;border-left:1px dotted #c6c6c6"></div>
<div style="position:absolute;z-index:1;left:0;top:243px;width:900px;height:0;border-top:1px dotted #c6c6c6"></div>
<div style="position:absolute;left:0;top:243px;width:900px;height:20px;background:#ffffff"></div>
<div style="position:absolute;left:4px;top:249.16px;font-size:10px;line-height:10px;color:#555555;white-space:nowrap">7. pi</div>
<div style="position:absolute;left:46px;top:243px;width:0;height:20px;border-left:1px dotted #c6c6c6"></div>
<div style="position:absolute;left:47px;width:43px;text-align:right;top:249.16px;font-size:10px;line-height:10px;color:#555555;white-space:nowrap">08:00</div>
<div style="position:absolute;left:93px;top:243px;width:0;height:20px;border-left:1px dotted #c6c6c6"></div>
<div style="position:absolute;left:94px;width:43px;text-align:right;top:249.16px;font-size:10px;line-height:10px;color:#555555;white-space:nowrap">17:00</div>
<div style="position:absolute;left:140px;top:243px;width:0;height:20px;border-left:1px dotted #c6c6c6"></div>
<div style="position:absolute;left:141px;width:43px;text-align:right;top:249.16px;font-size:10px;line-height:10px;color:#555555;white-space:nowrap">09:00</div>
<div style="position:absolute;left:187px;top:243px;width:0;height:20px;border-left:1px dotted #c6c6c6"></div>
<div style="position:absolute;left:188px;width:42.5px;text-align:right;top:249.16px;font-size:10px;line-height:10px;color:#555555;white-space:nowrap">08:00</div>
<div style="position:absolute;left:234px;top:243px;width:0;height:20px;border-left:1px dotted #c6c6c6"></div>
<div style="position:absolute;left:234.5px;width:47.0px;text-align:center;top:249.16px;font-size:10px;line-height:10px;color:#555555;white-space:nowrap">1.</div>
<div style="position:absolute;left:281px;top:243px;width:0;height:20px;border-left:1px dotted #c6c6c6"></div>
<div style="position:absolute;left:328px;top:243px;width:0;height:20px;border-left:1px dotted #c6c6c6"></div>
<div style="position:absolute;left:329px;width:47px;text-align:center;top:249.16px;font-size:10px;line-height:10px;color:#555555;white-space:nowrap">1</div>
<div style="position:absolute;left:375px;top:243px;width:0;height:20px;border-left:1px dotted #c6c6c6"></div>
<div style="position:absolute;left:376px;width:43px;text-align:right;top:249.16px;font-size:10px;line-height:10px;color:#555555;white-space:nowrap">01:00</div>
<div style="position:absolute;left:422px;top:243px;width:0;height:20px;border-left:1px dotted #c6c6c6"></div>
<div style="position:absolute;left:423px;width:43.5px;text-align:right;top:249.16px;font-size:10px;line-height:10px;color:#555555;white-space:nowrap">00:30</div>
<div style="position:absolute;left:470px;top:243px;width:0;height:20px;border-left:1px dotted #c6c6c6"></div>
<div style="position:absolute;left:470.5px;width:43.200000000000045px;text-align:right;top:249.16px;font-size:10px;line-height:10px;color:#555555;white-space:nowrap">02:00</div>
<div style="position:absolute;left:517px;top:243px;width:0;height:20px;border-left:1px dotted #c6c6c6"></div>
<div style="position:absolute;left:564px;top:243px;width:0;height:20px;border-left:1px dotted #c6c6c6"></div>
<div style="position:absolute;left:620px;top:243px;width:0;height:20px;border-left:1px dotted #c6c6c6"></div>
<div style="position:absolute;left:667px;top:243px;width:0;height:20px;border-left:1px dotted #c6c6c6"></div>
<div style="position:absolute;left:671.3px;top:249.16px;font-size:10px;line-height:10px;color:#555555;white-space:nowrap">M [O 01:00]</div>
<div style="position:absolute;left:776px;top:243px;width:0;height:20px;border-left:1px dotted #c6c6c6"></div>
<div style="position:absolute;z-index:1;left:0;top:263px;width:900px;height:0;border-top:1px dotted #c4c2a6"></div>
<div style="position:absolute;left:0;top:263px;width:900px;height:20px;background:#fefbd0"></div>
<div style="position:absolute;left:4px;top:268.98px;font-size:10px;line-height:10px;color:#5b5b45;white-space:nowrap">8. so</div>
<div style="position:absolute;left:46px;top:263px;width:0;height:20px;border-left:1px dotted #c4c2a6"></div>
<div style="position:absolute;left:93px;top:263px;width:0;height:20px;border-left:1px dotted #c4c2a6"></div>
<div style="position:absolute;left:140px;top:263px;width:0;height:20px;border-left:1px dotted #c4c2a6"></div>
<div style="position:absolute;left:187px;top:263px;width:0;height:20px;border-left:1px dotted #c4c2a6"></div>
<div style="position:absolute;left:234px;top:263px;width:0;height:20px;border-left:1px dotted #c4c2a6"></div>
<div style="position:absolute;left:281px;top:263px;width:0;height:20px;border-left:1px dotted #c4c2a6"></div>
<div style="position:absolute;left:328px;top:263px;width:0;height:20px;border-left:1px dotted #c4c2a6"></div>
<div style="position:absolute;left:375px;top:263px;width:0;height:20px;border-left:1px dotted #c4c2a6"></div>
<div style="position:absolute;left:422px;top:263px;width:0;height:20px;border-left:1px dotted #c4c2a6"></div>
<div style="position:absolute;left:470px;top:263px;width:0;height:20px;border-left:1px dotted #c4c2a6"></div>
<div style="position:absolute;left:470.5px;width:43.200000000000045px;text-align:right;top:268.98px;font-size:10px;line-height:10px;color:#5b5b45;white-space:nowrap">02:00</div>
<div style="position:absolute;left:517px;top:263px;width:0;height:20px;border-left:1px dotted #c4c2a6"></div>
<div style="position:absolute;left:564px;top:263px;width:0;height:20px;border-left:1px dotted #c4c2a6"></div>
<div style="position:absolute;left:620px;top:263px;width:0;height:20px;border-left:1px dotted #c4c2a6"></div>
<div style="position:absolute;left:667px;top:263px;width:0;height:20px;border-left:1px dotted #c4c2a6"></div>
<div style="position:absolute;left:776px;top:263px;width:0;height:20px;border-left:1px dotted #c4c2a6"></div>
<div style="position:absolute;z-index:1;left:0;top:283px;width:900px;height:0;border-top:1px dotted #c4c2a6"></div>
<div style="position:absolute;left:0;top:283px;width:900px;height:20px;background:#fefbd0"></div>
<div style="position:absolute;left:4px;top:288.80px;font-size:10px;line-height:10px;color:#5b5b45;white-space:nowrap">9. ne</div>
<div style="position:absolute;left:46px;top:283px;width:0;height:20px;border-left:1px dotted #c4c2a6"></div>
<div style="position:absolute;left:93px;top:283px;width:0;height:20px;border-left:1px dotted #c4c2a6"></div>
<div style="position:absolute;left:140px;top:283px;width:0;height:20px;border-left:1px dotted #c4c2a6"></div>
<div style="position:absolute;left:187px;top:283px;width:0;height:20px;border-left:1px dotted #c4c2a6"></div>
<div style="position:absolute;left:234px;top:283px;width:0;height:20px;border-left:1px dotted #c4c2a6"></div>
<div style="position:absolute;left:281px;top:283px;width:0;height:20px;border-left:1px dotted #c4c2a6"></div>
<div style="position:absolute;left:328px;top:283px;width:0;height:20px;border-left:1px dotted #c4c2a6"></div>
<div style="position:absolute;left:375px;top:283px;width:0;height:20px;border-left:1px dotted #c4c2a6"></div>
<div style="position:absolute;left:422px;top:283px;width:0;height:20px;border-left:1px dotted #c4c2a6"></div>
<div style="position:absolute;left:470px;top:283px;width:0;height:20px;border-left:1px dotted #c4c2a6"></div>
<div style="position:absolute;left:470.5px;width:43.200000000000045px;text-align:right;top:288.80px;font-size:10px;line-height:10px;color:#5b5b45;white-space:nowrap">02:00</div>
<div style="position:absolute;left:517px;top:283px;width:0;height:20px;border-left:1px dotted #c4c2a6"></div>
<div style="position:absolute;left:564px;top:283px;width:0;height:20px;border-left:1px dotted #c4c2a6"></div>
<div style="position:absolute;left:620px;top:283px;width:0;height:20px;border-left:1px dotted #c4c2a6"></div>
<div style="position:absolute;left:667px;top:283px;width:0;height:20px;border-left:1px dotted #c4c2a6"></div>
<div style="position:absolute;left:776px;top:283px;width:0;height:20px;border-left:1px dotted #c4c2a6"></div>
<div style="position:absolute;z-index:1;left:0;top:303px;width:900px;height:0;border-top:1px dotted #c4c2a6"></div>
<div style="position:absolute;left:0;top:303px;width:900px;height:19px;background:#ffffff"></div>
<div style="position:absolute;left:4px;top:308.62px;font-size:10px;line-height:10px;color:#555555;white-space:nowrap">10. po</div>
<div style="position:absolute;left:46px;top:303px;width:0;height:19px;border-left:1px dotted #c6c6c6"></div>
<div style="position:absolute;left:47px;width:43px;text-align:right;top:308.62px;font-size:10px;line-height:10px;color:#555555;white-space:nowrap">08:00</div>
<div style="position:absolute;left:93px;top:303px;width:0;height:19px;border-left:1px dotted #c6c6c6"></div>
<div style="position:absolute;left:94px;width:43px;text-align:right;top:308.62px;font-size:10px;line-height:10px;color:#555555;white-space:nowrap">17:00</div>
<div style="position:absolute;left:140px;top:303px;width:0;height:19px;border-left:1px dotted #c6c6c6"></div>
<div style="position:absolute;left:141px;width:43px;text-align:right;top:308.62px;font-size:10px;line-height:10px;color:#555555;white-space:nowrap">09:00</div>
<div style="position:absolute;left:187px;top:303px;width:0;height:19px;border-left:1px dotted #c6c6c6"></div>
<div style="position:absolute;left:188px;width:42.5px;text-align:right;top:308.62px;font-size:10px;line-height:10px;color:#555555;white-space:nowrap">08:00</div>
<div style="position:absolute;left:234px;top:303px;width:0;height:19px;border-left:1px dotted #c6c6c6"></div>
<div style="position:absolute;left:234.5px;width:47.0px;text-align:center;top:308.62px;font-size:10px;line-height:10px;color:#555555;white-space:nowrap">1.</div>
<div style="position:absolute;left:281px;top:303px;width:0;height:19px;border-left:1px dotted #c6c6c6"></div>
<div style="position:absolute;left:328px;top:303px;width:0;height:19px;border-left:1px dotted #c6c6c6"></div>
<div style="position:absolute;left:329px;width:47px;text-align:center;top:308.62px;font-size:10px;line-height:10px;color:#555555;white-space:nowrap">1</div>
<div style="position:absolute;left:375px;top:303px;width:0;height:19px;border-left:1px dotted #c6c6c6"></div>
<div style="position:absolute;left:376px;width:43px;text-align:right;top:308.62px;font-size:10px;line-height:10px;color:#555555;white-space:nowrap">01:00</div>
<div style="position:absolute;left:422px;top:303px;width:0;height:19px;border-left:1px dotted #c6c6c6"></div>
<div style="position:absolute;left:423px;width:43.5px;text-align:right;top:308.62px;font-size:10px;line-height:10px;color:#555555;white-space:nowrap">00:30</div>
<div style="position:absolute;left:470px;top:303px;width:0;height:19px;border-left:1px dotted #c6c6c6"></div>
<div style="position:absolute;left:470.5px;width:43.200000000000045px;text-align:right;top:308.62px;font-size:10px;line-height:10px;color:#555555;white-space:nowrap">02:30</div>
<div style="position:absolute;left:517px;top:303px;width:0;height:19px;border-left:1px dotted #c6c6c6"></div>
<div style="position:absolute;left:564px;top:303px;width:0;height:19px;border-left:1px dotted #c6c6c6"></div>
<div style="position:absolute;left:620px;top:303px;width:0;height:19px;border-left:1px dotted #c6c6c6"></div>
<div style="position:absolute;left:667px;top:303px;width:0;height:19px;border-left:1px dotted #c6c6c6"></div>
<div style="position:absolute;left:671.3px;top:308.62px;font-size:10px;line-height:10px;color:#555555;white-space:nowrap">M [O 01:00]</div>
<div style="position:absolute;left:776px;top:303px;width:0;height:19px;border-left:1px dotted #c6c6c6"></div>
<div style="position:absolute;z-index:1;left:0;top:322px;width:900px;height:0;border-top:1px dotted #c6c6c6"></div>
<div style="position:absolute;left:0;top:322px;width:900px;height:20px;background:#ffffff"></div>
<div style="position:absolute;left:4px;top:328.44px;font-size:10px;line-height:10px;color:#555555;white-space:nowrap">11. ut</div>
<div style="position:absolute;left:46px;top:322px;width:0;height:20px;border-left:1px dotted #c6c6c6"></div>
<div style="position:absolute;left:47px;width:43px;text-align:right;top:328.44px;font-size:10px;line-height:10px;color:#555555;white-space:nowrap">08:00</div>
<div style="position:absolute;left:93px;top:322px;width:0;height:20px;border-left:1px dotted #c6c6c6"></div>
<div style="position:absolute;left:94px;width:43px;text-align:right;top:328.44px;font-size:10px;line-height:10px;color:#555555;white-space:nowrap">17:00</div>
<div style="position:absolute;left:140px;top:322px;width:0;height:20px;border-left:1px dotted #c6c6c6"></div>
<div style="position:absolute;left:141px;width:43px;text-align:right;top:328.44px;font-size:10px;line-height:10px;color:#555555;white-space:nowrap">09:00</div>
<div style="position:absolute;left:187px;top:322px;width:0;height:20px;border-left:1px dotted #c6c6c6"></div>
<div style="position:absolute;left:188px;width:42.5px;text-align:right;top:328.44px;font-size:10px;line-height:10px;color:#555555;white-space:nowrap">08:00</div>
<div style="position:absolute;left:234px;top:322px;width:0;height:20px;border-left:1px dotted #c6c6c6"></div>
<div style="position:absolute;left:234.5px;width:47.0px;text-align:center;top:328.44px;font-size:10px;line-height:10px;color:#555555;white-space:nowrap">1.</div>
<div style="position:absolute;left:281px;top:322px;width:0;height:20px;border-left:1px dotted #c6c6c6"></div>
<div style="position:absolute;left:328px;top:322px;width:0;height:20px;border-left:1px dotted #c6c6c6"></div>
<div style="position:absolute;left:329px;width:47px;text-align:center;top:328.44px;font-size:10px;line-height:10px;color:#555555;white-space:nowrap">1</div>
<div style="position:absolute;left:375px;top:322px;width:0;height:20px;border-left:1px dotted #c6c6c6"></div>
<div style="position:absolute;left:376px;width:43px;text-align:right;top:328.44px;font-size:10px;line-height:10px;color:#555555;white-space:nowrap">01:00</div>
<div style="position:absolute;left:422px;top:322px;width:0;height:20px;border-left:1px dotted #c6c6c6"></div>
<div style="position:absolute;left:423px;width:43.5px;text-align:right;top:328.44px;font-size:10px;line-height:10px;color:#555555;white-space:nowrap">00:30</div>
<div style="position:absolute;left:470px;top:322px;width:0;height:20px;border-left:1px dotted #c6c6c6"></div>
<div style="position:absolute;left:470.5px;width:43.200000000000045px;text-align:right;top:328.44px;font-size:10px;line-height:10px;color:#555555;white-space:nowrap">03:00</div>
<div style="position:absolute;left:517px;top:322px;width:0;height:20px;border-left:1px dotted #c6c6c6"></div>
<div style="position:absolute;left:564px;top:322px;width:0;height:20px;border-left:1px dotted #c6c6c6"></div>
<div style="position:absolute;left:620px;top:322px;width:0;height:20px;border-left:1px dotted #c6c6c6"></div>
<div style="position:absolute;left:667px;top:322px;width:0;height:20px;border-left:1px dotted #c6c6c6"></div>
<div style="position:absolute;left:671.3px;top:328.44px;font-size:10px;line-height:10px;color:#555555;white-space:nowrap">M [O 01:00]</div>
<div style="position:absolute;left:776px;top:322px;width:0;height:20px;border-left:1px dotted #c6c6c6"></div>
<div style="position:absolute;z-index:1;left:0;top:342px;width:900px;height:0;border-top:1px dotted #c6c6c6"></div>
<div style="position:absolute;left:0;top:342px;width:900px;height:20px;background:#ffffff"></div>
<div style="position:absolute;left:4px;top:348.25px;font-size:10px;line-height:10px;color:#555555;white-space:nowrap">12. st</div>
<div style="position:absolute;left:46px;top:342px;width:0;height:20px;border-left:1px dotted #c6c6c6"></div>
<div style="position:absolute;left:93px;top:342px;width:0;height:20px;border-left:1px dotted #c6c6c6"></div>
<div style="position:absolute;left:140px;top:342px;width:0;height:20px;border-left:1px dotted #c6c6c6"></div>
<div style="position:absolute;left:141px;width:43px;text-align:right;top:348.25px;font-size:10px;line-height:10px;color:#555555;white-space:nowrap">07:30</div>
<div style="position:absolute;left:187px;top:342px;width:0;height:20px;border-left:1px dotted #c6c6c6"></div>
<div style="position:absolute;left:234px;top:342px;width:0;height:20px;border-left:1px dotted #c6c6c6"></div>
<div style="position:absolute;left:234.5px;width:47.0px;text-align:center;top:348.25px;font-size:10px;line-height:10px;color:#555555;white-space:nowrap">P 1.</div>
<div style="position:absolute;left:281px;top:342px;width:0;height:20px;border-left:1px dotted #c6c6c6"></div>
<div style="position:absolute;left:328px;top:342px;width:0;height:20px;border-left:1px dotted #c6c6c6"></div>
<div style="position:absolute;left:375px;top:342px;width:0;height:20px;border-left:1px dotted #c6c6c6"></div>
<div style="position:absolute;left:422px;top:342px;width:0;height:20px;border-left:1px dotted #c6c6c6"></div>
<div style="position:absolute;left:470px;top:342px;width:0;height:20px;border-left:1px dotted #c6c6c6"></div>
<div style="position:absolute;left:470.5px;width:43.200000000000045px;text-align:right;top:348.25px;font-size:10px;line-height:10px;color:#555555;white-space:nowrap">03:00</div>
<div style="position:absolute;left:517px;top:342px;width:0;height:20px;border-left:1px dotted #c6c6c6"></div>
<div style="position:absolute;left:564px;top:342px;width:0;height:20px;border-left:1px dotted #c6c6c6"></div>
<div style="position:absolute;left:620px;top:342px;width:0;height:20px;border-left:1px dotted #c6c6c6"></div>
<div style="position:absolute;left:667px;top:342px;width:0;height:20px;border-left:1px dotted #c6c6c6"></div>
<div style="position:absolute;left:671.3px;top:348.25px;font-size:10px;line-height:10px;color:#555555;white-space:nowrap">M [D 07:30]</div>
<div style="position:absolute;left:776px;top:342px;width:0;height:20px;border-left:1px dotted #c6c6c6"></div>
<div style="position:absolute;z-index:1;left:0;top:362px;width:900px;height:0;border-top:1px dotted #f3c79a"></div>
<div style="position:absolute;left:0;top:362px;width:900px;height:20px;background:#d56a0c"></div>
<div style="position:absolute;left:4px;top:368.07px;font-size:10px;line-height:10px;color:#fff4e6;white-space:nowrap">13. št</div>
<div style="position:absolute;left:46px;top:362px;width:0;height:20px;border-left:1px dotted #f3c79a"></div>
<div style="position:absolute;left:47px;width:43px;text-align:right;top:368.07px;font-size:10px;line-height:10px;color:#fff4e6;white-space:nowrap">08:00</div>
<div style="position:absolute;left:93px;top:362px;width:0;height:20px;border-left:1px dotted #f3c79a"></div>
<div style="position:absolute;left:140px;top:362px;width:0;height:20px;border-left:1px dotted #f3c79a"></div>
<div style="position:absolute;left:141px;width:43px;text-align:right;top:368.07px;font-size:10px;line-height:10px;color:#fff4e6;white-space:nowrap">09:21</div>
<div style="position:absolute;left:187px;top:362px;width:0;height:20px;border-left:1px dotted #f3c79a"></div>
<div style="position:absolute;left:188px;width:42.5px;text-align:right;top:368.07px;font-size:10px;line-height:10px;color:#fff4e6;white-space:nowrap">08:17</div>
<div style="position:absolute;left:234px;top:362px;width:0;height:20px;border-left:1px dotted #f3c79a"></div>
<div style="position:absolute;left:234.5px;width:47.0px;text-align:center;top:368.07px;font-size:10px;line-height:10px;color:#fff4e6;white-space:nowrap">1.</div>
<div style="position:absolute;left:281px;top:362px;width:0;height:20px;border-left:1px dotted #f3c79a"></div>
<div style="position:absolute;left:328px;top:362px;width:0;height:20px;border-left:1px dotted #f3c79a"></div>
<div style="position:absolute;left:329px;width:47px;text-align:center;top:368.07px;font-size:10px;line-height:10px;color:#fff4e6;white-space:nowrap">1</div>
<div style="position:absolute;left:375px;top:362px;width:0;height:20px;border-left:1px dotted #f3c79a"></div>
<div style="position:absolute;left:422px;top:362px;width:0;height:20px;border-left:1px dotted #f3c79a"></div>
<div style="position:absolute;left:423px;width:43.5px;text-align:right;top:368.07px;font-size:10px;line-height:10px;color:#fff4e6;white-space:nowrap">00:47</div>
<div style="position:absolute;left:470px;top:362px;width:0;height:20px;border-left:1px dotted #f3c79a"></div>
<div style="position:absolute;left:470.5px;width:43.200000000000045px;text-align:right;top:368.07px;font-size:10px;line-height:10px;color:#fff4e6;white-space:nowrap">03:47</div>
<div style="position:absolute;left:517px;top:362px;width:0;height:20px;border-left:1px dotted #f3c79a"></div>
<div style="position:absolute;left:564px;top:362px;width:0;height:20px;border-left:1px dotted #f3c79a"></div>
<div style="position:absolute;left:620px;top:362px;width:0;height:20px;border-left:1px dotted #f3c79a"></div>
<div style="position:absolute;left:667px;top:362px;width:0;height:20px;border-left:1px dotted #f3c79a"></div>
<div style="position:absolute;left:671.3px;top:368.07px;font-size:10px;line-height:10px;color:#fff4e6;white-space:nowrap">M [SLC 08:17] [! 01:04]</div>
<div style="position:absolute;left:776px;top:362px;width:0;height:20px;border-left:1px dotted #f3c79a"></div>
<div style="position:absolute;z-index:1;left:0;top:382px;width:900px;height:0;border-top:1px dotted #f3c79a"></div>
<div style="position:absolute;left:0;top:382px;width:900px;height:20px;background:#ffffff"></div>
<div style="position:absolute;left:4px;top:387.90px;font-size:10px;line-height:10px;color:#555555;white-space:nowrap">14. pi</div>
<div style="position:absolute;left:46px;top:382px;width:0;height:20px;border-left:1px dotted #c6c6c6"></div>
<div style="position:absolute;left:47px;width:43px;text-align:right;top:387.90px;font-size:10px;line-height:10px;color:#555555;white-space:nowrap">08:00</div>
<div style="position:absolute;left:93px;top:382px;width:0;height:20px;border-left:1px dotted #c6c6c6"></div>
<div style="position:absolute;left:94px;width:43px;text-align:right;top:387.90px;font-size:10px;line-height:10px;color:#555555;white-space:nowrap">17:00</div>
<div style="position:absolute;left:140px;top:382px;width:0;height:20px;border-left:1px dotted #c6c6c6"></div>
<div style="position:absolute;left:141px;width:43px;text-align:right;top:387.90px;font-size:10px;line-height:10px;color:#555555;white-space:nowrap">09:00</div>
<div style="position:absolute;left:187px;top:382px;width:0;height:20px;border-left:1px dotted #c6c6c6"></div>
<div style="position:absolute;left:188px;width:42.5px;text-align:right;top:387.90px;font-size:10px;line-height:10px;color:#555555;white-space:nowrap">08:00</div>
<div style="position:absolute;left:234px;top:382px;width:0;height:20px;border-left:1px dotted #c6c6c6"></div>
<div style="position:absolute;left:234.5px;width:47.0px;text-align:center;top:387.90px;font-size:10px;line-height:10px;color:#555555;white-space:nowrap">1.</div>
<div style="position:absolute;left:281px;top:382px;width:0;height:20px;border-left:1px dotted #c6c6c6"></div>
<div style="position:absolute;left:328px;top:382px;width:0;height:20px;border-left:1px dotted #c6c6c6"></div>
<div style="position:absolute;left:329px;width:47px;text-align:center;top:387.90px;font-size:10px;line-height:10px;color:#555555;white-space:nowrap">1</div>
<div style="position:absolute;left:375px;top:382px;width:0;height:20px;border-left:1px dotted #c6c6c6"></div>
<div style="position:absolute;left:376px;width:43px;text-align:right;top:387.90px;font-size:10px;line-height:10px;color:#555555;white-space:nowrap">01:00</div>
<div style="position:absolute;left:422px;top:382px;width:0;height:20px;border-left:1px dotted #c6c6c6"></div>
<div style="position:absolute;left:423px;width:43.5px;text-align:right;top:387.90px;font-size:10px;line-height:10px;color:#555555;white-space:nowrap">00:30</div>
<div style="position:absolute;left:470px;top:382px;width:0;height:20px;border-left:1px dotted #c6c6c6"></div>
<div style="position:absolute;left:470.5px;width:43.200000000000045px;text-align:right;top:387.90px;font-size:10px;line-height:10px;color:#555555;white-space:nowrap">04:17</div>
<div style="position:absolute;left:517px;top:382px;width:0;height:20px;border-left:1px dotted #c6c6c6"></div>
<div style="position:absolute;left:564px;top:382px;width:0;height:20px;border-left:1px dotted #c6c6c6"></div>
<div style="position:absolute;left:620px;top:382px;width:0;height:20px;border-left:1px dotted #c6c6c6"></div>
<div style="position:absolute;left:667px;top:382px;width:0;height:20px;border-left:1px dotted #c6c6c6"></div>
<div style="position:absolute;left:671.3px;top:387.90px;font-size:10px;line-height:10px;color:#555555;white-space:nowrap">M [O 01:00]</div>
<div style="position:absolute;left:776px;top:382px;width:0;height:20px;border-left:1px dotted #c6c6c6"></div>
<div style="position:absolute;z-index:1;left:0;top:402px;width:900px;height:0;border-top:1px dotted #c4c2a6"></div>
<div style="position:absolute;left:0;top:402px;width:900px;height:20px;background:#fefbd0"></div>
<div style="position:absolute;left:4px;top:407.72px;font-size:10px;line-height:10px;color:#5b5b45;white-space:nowrap">15. so</div>
<div style="position:absolute;left:46px;top:402px;width:0;height:20px;border-left:1px dotted #c4c2a6"></div>
<div style="position:absolute;left:93px;top:402px;width:0;height:20px;border-left:1px dotted #c4c2a6"></div>
<div style="position:absolute;left:140px;top:402px;width:0;height:20px;border-left:1px dotted #c4c2a6"></div>
<div style="position:absolute;left:187px;top:402px;width:0;height:20px;border-left:1px dotted #c4c2a6"></div>
<div style="position:absolute;left:234px;top:402px;width:0;height:20px;border-left:1px dotted #c4c2a6"></div>
<div style="position:absolute;left:281px;top:402px;width:0;height:20px;border-left:1px dotted #c4c2a6"></div>
<div style="position:absolute;left:328px;top:402px;width:0;height:20px;border-left:1px dotted #c4c2a6"></div>
<div style="position:absolute;left:375px;top:402px;width:0;height:20px;border-left:1px dotted #c4c2a6"></div>
<div style="position:absolute;left:422px;top:402px;width:0;height:20px;border-left:1px dotted #c4c2a6"></div>
<div style="position:absolute;left:470px;top:402px;width:0;height:20px;border-left:1px dotted #c4c2a6"></div>
<div style="position:absolute;left:470.5px;width:43.200000000000045px;text-align:right;top:407.72px;font-size:10px;line-height:10px;color:#5b5b45;white-space:nowrap">04:17</div>
<div style="position:absolute;left:517px;top:402px;width:0;height:20px;border-left:1px dotted #c4c2a6"></div>
<div style="position:absolute;left:564px;top:402px;width:0;height:20px;border-left:1px dotted #c4c2a6"></div>
<div style="position:absolute;left:620px;top:402px;width:0;height:20px;border-left:1px dotted #c4c2a6"></div>
<div style="position:absolute;left:667px;top:402px;width:0;height:20px;border-left:1px dotted #c4c2a6"></div>
<div style="position:absolute;left:776px;top:402px;width:0;height:20px;border-left:1px dotted #c4c2a6"></div>
<div style="position:absolute;z-index:1;left:0;top:422px;width:900px;height:0;border-top:1px dotted #c4c2a6"></div>
<div style="position:absolute;left:0;top:422px;width:900px;height:19px;background:#fefbd0"></div>
<div style="position:absolute;left:4px;top:427.54px;font-size:10px;line-height:10px;color:#5b5b45;white-space:nowrap">16. ne</div>
<div style="position:absolute;left:46px;top:422px;width:0;height:19px;border-left:1px dotted #c4c2a6"></div>
<div style="position:absolute;left:93px;top:422px;width:0;height:19px;border-left:1px dotted #c4c2a6"></div>
<div style="position:absolute;left:140px;top:422px;width:0;height:19px;border-left:1px dotted #c4c2a6"></div>
<div style="position:absolute;left:187px;top:422px;width:0;height:19px;border-left:1px dotted #c4c2a6"></div>
<div style="position:absolute;left:234px;top:422px;width:0;height:19px;border-left:1px dotted #c4c2a6"></div>
<div style="position:absolute;left:281px;top:422px;width:0;height:19px;border-left:1px dotted #c4c2a6"></div>
<div style="position:absolute;left:328px;top:422px;width:0;height:19px;border-left:1px dotted #c4c2a6"></div>
<div style="position:absolute;left:375px;top:422px;width:0;height:19px;border-left:1px dotted #c4c2a6"></div>
<div style="position:absolute;left:422px;top:422px;width:0;height:19px;border-left:1px dotted #c4c2a6"></div>
<div style="position:absolute;left:470px;top:422px;width:0;height:19px;border-left:1px dotted #c4c2a6"></div>
<div style="position:absolute;left:470.5px;width:43.200000000000045px;text-align:right;top:427.54px;font-size:10px;line-height:10px;color:#5b5b45;white-space:nowrap">04:17</div>
<div style="position:absolute;left:517px;top:422px;width:0;height:19px;border-left:1px dotted #c4c2a6"></div>
<div style="position:absolute;left:564px;top:422px;width:0;height:19px;border-left:1px dotted #c4c2a6"></div>
<div style="position:absolute;left:620px;top:422px;width:0;height:19px;border-left:1px dotted #c4c2a6"></div>
<div style="position:absolute;left:667px;top:422px;width:0;height:19px;border-left:1px dotted #c4c2a6"></div>
<div style="position:absolute;left:776px;top:422px;width:0;height:19px;border-left:1px dotted #c4c2a6"></div>
<div style="position:absolute;z-index:1;left:0;top:441px;width:900px;height:0;border-top:1px dotted #c4c2a6"></div>
<div style="position:absolute;left:0;top:441px;width:900px;height:20px;background:#ffffff"></div>
<div style="position:absolute;left:4px;top:447.36px;font-size:10px;line-height:10px;color:#555555;white-space:nowrap">17. po</div>
<div style="position:absolute;left:46px;top:441px;width:0;height:20px;border-left:1px dotted #c6c6c6"></div>
<div style="position:absolute;left:47px;width:43px;text-align:right;top:447.36px;font-size:10px;line-height:10px;color:#555555;white-space:nowrap">08:00</div>
<div style="position:absolute;left:93px;top:441px;width:0;height:20px;border-left:1px dotted #c6c6c6"></div>
<div style="position:absolute;left:94px;width:43px;text-align:right;top:447.36px;font-size:10px;line-height:10px;color:#555555;white-space:nowrap">17:00</div>
<div style="position:absolute;left:140px;top:441px;width:0;height:20px;border-left:1px dotted #c6c6c6"></div>
<div style="position:absolute;left:141px;width:43px;text-align:right;top:447.36px;font-size:10px;line-height:10px;color:#555555;white-space:nowrap">09:00</div>
<div style="position:absolute;left:187px;top:441px;width:0;height:20px;border-left:1px dotted #c6c6c6"></div>
<div style="position:absolute;left:188px;width:42.5px;text-align:right;top:447.36px;font-size:10px;line-height:10px;color:#555555;white-space:nowrap">08:00</div>
<div style="position:absolute;left:234px;top:441px;width:0;height:20px;border-left:1px dotted #c6c6c6"></div>
<div style="position:absolute;left:234.5px;width:47.0px;text-align:center;top:447.36px;font-size:10px;line-height:10px;color:#555555;white-space:nowrap">1.</div>
<div style="position:absolute;left:281px;top:441px;width:0;height:20px;border-left:1px dotted #c6c6c6"></div>
<div style="position:absolute;left:328px;top:441px;width:0;height:20px;border-left:1px dotted #c6c6c6"></div>
<div style="position:absolute;left:329px;width:47px;text-align:center;top:447.36px;font-size:10px;line-height:10px;color:#555555;white-space:nowrap">1</div>
<div style="position:absolute;left:375px;top:441px;width:0;height:20px;border-left:1px dotted #c6c6c6"></div>
<div style="position:absolute;left:376px;width:43px;text-align:right;top:447.36px;font-size:10px;line-height:10px;color:#555555;white-space:nowrap">01:00</div>
<div style="position:absolute;left:422px;top:441px;width:0;height:20px;border-left:1px dotted #c6c6c6"></div>
<div style="position:absolute;left:423px;width:43.5px;text-align:right;top:447.36px;font-size:10px;line-height:10px;color:#555555;white-space:nowrap">00:30</div>
<div style="position:absolute;left:470px;top:441px;width:0;height:20px;border-left:1px dotted #c6c6c6"></div>
<div style="position:absolute;left:470.5px;width:43.200000000000045px;text-align:right;top:447.36px;font-size:10px;line-height:10px;color:#555555;white-space:nowrap">04:47</div>
<div style="position:absolute;left:517px;top:441px;width:0;height:20px;border-left:1px dotted #c6c6c6"></div>
<div style="position:absolute;left:564px;top:441px;width:0;height:20px;border-left:1px dotted #c6c6c6"></div>
<div style="position:absolute;left:620px;top:441px;width:0;height:20px;border-left:1px dotted #c6c6c6"></div>
<div style="position:absolute;left:667px;top:441px;width:0;height:20px;border-left:1px dotted #c6c6c6"></div>
<div style="position:absolute;left:671.3px;top:447.36px;font-size:10px;line-height:10px;color:#555555;white-space:nowrap">M [O 01:00]</div>
<div style="position:absolute;left:776px;top:441px;width:0;height:20px;border-left:1px dotted #c6c6c6"></div>
<div style="position:absolute;z-index:1;left:0;top:461px;width:900px;height:0;border-top:1px dotted #c6c6c6"></div>
<div style="position:absolute;left:0;top:461px;width:900px;height:20px;background:#ffffff"></div>
<div style="position:absolute;left:4px;top:467.18px;font-size:10px;line-height:10px;color:#555555;white-space:nowrap">18. ut</div>
<div style="position:absolute;left:46px;top:461px;width:0;height:20px;border-left:1px dotted #c6c6c6"></div>
<div style="position:absolute;left:47px;width:43px;text-align:right;top:467.18px;font-size:10px;line-height:10px;color:#555555;white-space:nowrap">08:00</div>
<div style="position:absolute;left:93px;top:461px;width:0;height:20px;border-left:1px dotted #c6c6c6"></div>
<div style="position:absolute;left:94px;width:43px;text-align:right;top:467.18px;font-size:10px;line-height:10px;color:#555555;white-space:nowrap">17:00</div>
<div style="position:absolute;left:140px;top:461px;width:0;height:20px;border-left:1px dotted #c6c6c6"></div>
<div style="position:absolute;left:141px;width:43px;text-align:right;top:467.18px;font-size:10px;line-height:10px;color:#555555;white-space:nowrap">09:00</div>
<div style="position:absolute;left:187px;top:461px;width:0;height:20px;border-left:1px dotted #c6c6c6"></div>
<div style="position:absolute;left:188px;width:42.5px;text-align:right;top:467.18px;font-size:10px;line-height:10px;color:#555555;white-space:nowrap">08:00</div>
<div style="position:absolute;left:234px;top:461px;width:0;height:20px;border-left:1px dotted #c6c6c6"></div>
<div style="position:absolute;left:234.5px;width:47.0px;text-align:center;top:467.18px;font-size:10px;line-height:10px;color:#555555;white-space:nowrap">1.</div>
<div style="position:absolute;left:281px;top:461px;width:0;height:20px;border-left:1px dotted #c6c6c6"></div>
<div style="position:absolute;left:328px;top:461px;width:0;height:20px;border-left:1px dotted #c6c6c6"></div>
<div style="position:absolute;left:329px;width:47px;text-align:center;top:467.18px;font-size:10px;line-height:10px;color:#555555;white-space:nowrap">1</div>
<div style="position:absolute;left:375px;top:461px;width:0;height:20px;border-left:1px dotted #c6c6c6"></div>
<div style="position:absolute;left:376px;width:43px;text-align:right;top:467.18px;font-size:10px;line-height:10px;color:#555555;white-space:nowrap">01:00</div>
<div style="position:absolute;left:422px;top:461px;width:0;height:20px;border-left:1px dotted #c6c6c6"></div>
<div style="position:absolute;left:423px;width:43.5px;text-align:right;top:467.18px;font-size:10px;line-height:10px;color:#555555;white-space:nowrap">00:30</div>
<div style="position:absolute;left:470px;top:461px;width:0;height:20px;border-left:1px dotted #c6c6c6"></div>
<div style="position:absolute;left:470.5px;width:43.200000000000045px;text-align:right;top:467.18px;font-size:10px;line-height:10px;color:#555555;white-space:nowrap">05:17</div>
<div style="position:absolute;left:517px;top:461px;width:0;height:20px;border-left:1px dotted #c6c6c6"></div>
<div style="position:absolute;left:564px;top:461px;width:0;height:20px;border-left:1px dotted #c6c6c6"></div>
<div style="position:absolute;left:620px;top:461px;width:0;height:20px;border-left:1px dotted #c6c6c6"></div>
<div style="position:absolute;left:667px;top:461px;width:0;height:20px;border-left:1px dotted #c6c6c6"></div>
<div style="position:absolute;left:671.3px;top:467.18px;font-size:10px;line-height:10px;color:#555555;white-space:nowrap">M [O 01:00]</div>
<div style="position:absolute;left:776px;top:461px;width:0;height:20px;border-left:1px dotted #c6c6c6"></div>
<div style="position:absolute;z-index:1;left:0;top:481px;width:900px;height:0;border-top:1px dotted #c6c6c6"></div>
<div style="position:absolute;left:0;top:481px;width:900px;height:20px;background:#ffffff"></div>
<div style="position:absolute;left:4px;top:487.00px;font-size:10px;line-height:10px;color:#555555;white-space:nowrap">19. st</div>
<div style="position:absolute;left:46px;top:481px;width:0;height:20px;border-left:1px dotted #c6c6c6"></div>
<div style="position:absolute;left:47px;width:43px;text-align:right;top:487.00px;font-size:10px;line-height:10px;color:#555555;white-space:nowrap">08:00</div>
<div style="position:absolute;left:93px;top:481px;width:0;height:20px;border-left:1px dotted #c6c6c6"></div>
<div style="position:absolute;left:94px;width:43px;text-align:right;top:487.00px;font-size:10px;line-height:10px;color:#555555;white-space:nowrap">17:00</div>
<div style="position:absolute;left:140px;top:481px;width:0;height:20px;border-left:1px dotted #c6c6c6"></div>
<div style="position:absolute;left:141px;width:43px;text-align:right;top:487.00px;font-size:10px;line-height:10px;color:#555555;white-space:nowrap">09:00</div>
<div style="position:absolute;left:187px;top:481px;width:0;height:20px;border-left:1px dotted #c6c6c6"></div>
<div style="position:absolute;left:188px;width:42.5px;text-align:right;top:487.00px;font-size:10px;line-height:10px;color:#555555;white-space:nowrap">08:00</div>
<div style="position:absolute;left:234px;top:481px;width:0;height:20px;border-left:1px dotted #c6c6c6"></div>
<div style="position:absolute;left:234.5px;width:47.0px;text-align:center;top:487.00px;font-size:10px;line-height:10px;color:#555555;white-space:nowrap">1.</div>
<div style="position:absolute;left:281px;top:481px;width:0;height:20px;border-left:1px dotted #c6c6c6"></div>
<div style="position:absolute;left:328px;top:481px;width:0;height:20px;border-left:1px dotted #c6c6c6"></div>
<div style="position:absolute;left:329px;width:47px;text-align:center;top:487.00px;font-size:10px;line-height:10px;color:#555555;white-space:nowrap">1</div>
<div style="position:absolute;left:375px;top:481px;width:0;height:20px;border-left:1px dotted #c6c6c6"></div>
<div style="position:absolute;left:376px;width:43px;text-align:right;top:487.00px;font-size:10px;line-height:10px;color:#555555;white-space:nowrap">01:00</div>
<div style="position:absolute;left:422px;top:481px;width:0;height:20px;border-left:1px dotted #c6c6c6"></div>
<div style="position:absolute;left:423px;width:43.5px;text-align:right;top:487.00px;font-size:10px;line-height:10px;color:#555555;white-space:nowrap">00:30</div>
<div style="position:absolute;left:470px;top:481px;width:0;height:20px;border-left:1px dotted #c6c6c6"></div>
<div style="position:absolute;left:470.5px;width:43.200000000000045px;text-align:right;top:487.00px;font-size:10px;line-height:10px;color:#555555;white-space:nowrap">05:47</div>
<div style="position:absolute;left:517px;top:481px;width:0;height:20px;border-left:1px dotted #c6c6c6"></div>
<div style="position:absolute;left:564px;top:481px;width:0;height:20px;border-left:1px dotted #c6c6c6"></div>
<div style="position:absolute;left:620px;top:481px;width:0;height:20px;border-left:1px dotted #c6c6c6"></div>
<div style="position:absolute;left:667px;top:481px;width:0;height:20px;border-left:1px dotted #c6c6c6"></div>
<div style="position:absolute;left:671.3px;top:487.00px;font-size:10px;line-height:10px;color:#555555;white-space:nowrap">M [O 01:00] [SL 02:36]</div>
<div style="position:absolute;left:776px;top:481px;width:0;height:20px;border-left:1px dotted #c6c6c6"></div>
<div style="position:absolute;z-index:1;left:0;top:501px;width:900px;height:0;border-top:1px dotted #c6c6c6"></div>
<div style="position:absolute;left:0;top:501px;width:900px;height:20px;background:#ffffff"></div>
<div style="position:absolute;left:4px;top:506.81px;font-size:10px;line-height:10px;color:#555555;white-space:nowrap">20. št</div>
<div style="position:absolute;left:46px;top:501px;width:0;height:20px;border-left:1px dotted #c6c6c6"></div>
<div style="position:absolute;left:47px;width:43px;text-align:right;top:506.81px;font-size:10px;line-height:10px;color:#555555;white-space:nowrap">08:00</div>
<div style="position:absolute;left:93px;top:501px;width:0;height:20px;border-left:1px dotted #c6c6c6"></div>
<div style="position:absolute;left:94px;width:43px;text-align:right;top:506.81px;font-size:10px;line-height:10px;color:#555555;white-space:nowrap">17:00</div>
<div style="position:absolute;left:140px;top:501px;width:0;height:20px;border-left:1px dotted #c6c6c6"></div>
<div style="position:absolute;left:141px;width:43px;text-align:right;top:506.81px;font-size:10px;line-height:10px;color:#555555;white-space:nowrap">09:00</div>
<div style="position:absolute;left:187px;top:501px;width:0;height:20px;border-left:1px dotted #c6c6c6"></div>
<div style="position:absolute;left:188px;width:42.5px;text-align:right;top:506.81px;font-size:10px;line-height:10px;color:#555555;white-space:nowrap">08:00</div>
<div style="position:absolute;left:234px;top:501px;width:0;height:20px;border-left:1px dotted #c6c6c6"></div>
<div style="position:absolute;left:234.5px;width:47.0px;text-align:center;top:506.81px;font-size:10px;line-height:10px;color:#555555;white-space:nowrap">1.</div>
<div style="position:absolute;left:281px;top:501px;width:0;height:20px;border-left:1px dotted #c6c6c6"></div>
<div style="position:absolute;left:328px;top:501px;width:0;height:20px;border-left:1px dotted #c6c6c6"></div>
<div style="position:absolute;left:329px;width:47px;text-align:center;top:506.81px;font-size:10px;line-height:10px;color:#555555;white-space:nowrap">1</div>
<div style="position:absolute;left:375px;top:501px;width:0;height:20px;border-left:1px dotted #c6c6c6"></div>
<div style="position:absolute;left:376px;width:43px;text-align:right;top:506.81px;font-size:10px;line-height:10px;color:#555555;white-space:nowrap">01:00</div>
<div style="position:absolute;left:422px;top:501px;width:0;height:20px;border-left:1px dotted #c6c6c6"></div>
<div style="position:absolute;left:423px;width:43.5px;text-align:right;top:506.81px;font-size:10px;line-height:10px;color:#555555;white-space:nowrap">00:30</div>
<div style="position:absolute;left:470px;top:501px;width:0;height:20px;border-left:1px dotted #c6c6c6"></div>
<div style="position:absolute;left:470.5px;width:43.200000000000045px;text-align:right;top:506.81px;font-size:10px;line-height:10px;color:#555555;white-space:nowrap">06:17</div>
<div style="position:absolute;left:517px;top:501px;width:0;height:20px;border-left:1px dotted #c6c6c6"></div>
<div style="position:absolute;left:564px;top:501px;width:0;height:20px;border-left:1px dotted #c6c6c6"></div>
<div style="position:absolute;left:620px;top:501px;width:0;height:20px;border-left:1px dotted #c6c6c6"></div>
<div style="position:absolute;left:667px;top:501px;width:0;height:20px;border-left:1px dotted #c6c6c6"></div>
<div style="position:absolute;left:671.3px;top:506.81px;font-size:10px;line-height:10px;color:#555555;white-space:nowrap">M [O 01:00]</div>
<div style="position:absolute;left:776px;top:501px;width:0;height:20px;border-left:1px dotted #c6c6c6"></div>
<div style="position:absolute;z-index:1;left:0;top:521px;width:900px;height:0;border-top:1px dotted #c6c6c6"></div>
<div style="position:absolute;left:0;top:521px;width:900px;height:20px;background:#ffffff"></div>
<div style="position:absolute;left:4px;top:526.63px;font-size:10px;line-height:10px;color:#555555;white-space:nowrap">21. pi</div>
<div style="position:absolute;left:46px;top:521px;width:0;height:20px;border-left:1px dotted #c6c6c6"></div>
<div style="position:absolute;left:47px;width:43px;text-align:right;top:526.63px;font-size:10px;line-height:10px;color:#555555;white-space:nowrap">08:00</div>
<div style="position:absolute;left:93px;top:521px;width:0;height:20px;border-left:1px dotted #c6c6c6"></div>
<div style="position:absolute;left:94px;width:43px;text-align:right;top:526.63px;font-size:10px;line-height:10px;color:#555555;white-space:nowrap">17:00</div>
<div style="position:absolute;left:140px;top:521px;width:0;height:20px;border-left:1px dotted #c6c6c6"></div>
<div style="position:absolute;left:141px;width:43px;text-align:right;top:526.63px;font-size:10px;line-height:10px;color:#555555;white-space:nowrap">09:00</div>
<div style="position:absolute;left:187px;top:521px;width:0;height:20px;border-left:1px dotted #c6c6c6"></div>
<div style="position:absolute;left:188px;width:42.5px;text-align:right;top:526.63px;font-size:10px;line-height:10px;color:#555555;white-space:nowrap">08:00</div>
<div style="position:absolute;left:234px;top:521px;width:0;height:20px;border-left:1px dotted #c6c6c6"></div>
<div style="position:absolute;left:234.5px;width:47.0px;text-align:center;top:526.63px;font-size:10px;line-height:10px;color:#555555;white-space:nowrap">1.</div>
<div style="position:absolute;left:281px;top:521px;width:0;height:20px;border-left:1px dotted #c6c6c6"></div>
<div style="position:absolute;left:328px;top:521px;width:0;height:20px;border-left:1px dotted #c6c6c6"></div>
<div style="position:absolute;left:329px;width:47px;text-align:center;top:526.63px;font-size:10px;line-height:10px;color:#555555;white-space:nowrap">1</div>
<div style="position:absolute;left:375px;top:521px;width:0;height:20px;border-left:1px dotted #c6c6c6"></div>
<div style="position:absolute;left:376px;width:43px;text-align:right;top:526.63px;font-size:10px;line-height:10px;color:#555555;white-space:nowrap">01:00</div>
<div style="position:absolute;left:422px;top:521px;width:0;height:20px;border-left:1px dotted #c6c6c6"></div>
<div style="position:absolute;left:423px;width:43.5px;text-align:right;top:526.63px;font-size:10px;line-height:10px;color:#555555;white-space:nowrap">00:30</div>
<div style="position:absolute;left:470px;top:521px;width:0;height:20px;border-left:1px dotted #c6c6c6"></div>
<div style="position:absolute;left:470.5px;width:43.200000000000045px;text-align:right;top:526.63px;font-size:10px;line-height:10px;color:#555555;white-space:nowrap">06:47</div>
<div style="position:absolute;left:517px;top:521px;width:0;height:20px;border-left:1px dotted #c6c6c6"></div>
<div style="position:absolute;left:564px;top:521px;width:0;height:20px;border-left:1px dotted #c6c6c6"></div>
<div style="position:absolute;left:620px;top:521px;width:0;height:20px;border-left:1px dotted #c6c6c6"></div>
<div style="position:absolute;left:667px;top:521px;width:0;height:20px;border-left:1px dotted #c6c6c6"></div>
<div style="position:absolute;left:671.3px;top:526.63px;font-size:10px;line-height:10px;color:#555555;white-space:nowrap">M [O 01:00]</div>
<div style="position:absolute;left:776px;top:521px;width:0;height:20px;border-left:1px dotted #c6c6c6"></div>
<div style="position:absolute;z-index:1;left:0;top:541px;width:900px;height:0;border-top:1px dotted #c4c2a6"></div>
<div style="position:absolute;left:0;top:541px;width:900px;height:19px;background:#fefbd0"></div>
<div style="position:absolute;left:4px;top:546.45px;font-size:10px;line-height:10px;color:#5b5b45;white-space:nowrap">22. so</div>
<div style="position:absolute;left:46px;top:541px;width:0;height:19px;border-left:1px dotted #c4c2a6"></div>
<div style="position:absolute;left:93px;top:541px;width:0;height:19px;border-left:1px dotted #c4c2a6"></div>
<div style="position:absolute;left:140px;top:541px;width:0;height:19px;border-left:1px dotted #c4c2a6"></div>
<div style="position:absolute;left:187px;top:541px;width:0;height:19px;border-left:1px dotted #c4c2a6"></div>
<div style="position:absolute;left:234px;top:541px;width:0;height:19px;border-left:1px dotted #c4c2a6"></div>
<div style="position:absolute;left:281px;top:541px;width:0;height:19px;border-left:1px dotted #c4c2a6"></div>
<div style="position:absolute;left:328px;top:541px;width:0;height:19px;border-left:1px dotted #c4c2a6"></div>
<div style="position:absolute;left:375px;top:541px;width:0;height:19px;border-left:1px dotted #c4c2a6"></div>
<div style="position:absolute;left:422px;top:541px;width:0;height:19px;border-left:1px dotted #c4c2a6"></div>
<div style="position:absolute;left:470px;top:541px;width:0;height:19px;border-left:1px dotted #c4c2a6"></div>
<div style="position:absolute;left:470.5px;width:43.200000000000045px;text-align:right;top:546.45px;font-size:10px;line-height:10px;color:#5b5b45;white-space:nowrap">06:47</div>
<div style="position:absolute;left:517px;top:541px;width:0;height:19px;border-left:1px dotted #c4c2a6"></div>
<div style="position:absolute;left:564px;top:541px;width:0;height:19px;border-left:1px dotted #c4c2a6"></div>
<div style="position:absolute;left:620px;top:541px;width:0;height:19px;border-left:1px dotted #c4c2a6"></div>
<div style="position:absolute;left:667px;top:541px;width:0;height:19px;border-left:1px dotted #c4c2a6"></div>
<div style="position:absolute;left:776px;top:541px;width:0;height:19px;border-left:1px dotted #c4c2a6"></div>
<div style="position:absolute;z-index:1;left:0;top:560px;width:900px;height:0;border-top:1px dotted #c4c2a6"></div>
<div style="position:absolute;left:0;top:560px;width:900px;height:20px;background:#fefbd0"></div>
<div style="position:absolute;left:4px;top:566.27px;font-size:10px;line-height:10px;color:#5b5b45;white-space:nowrap">23. ne</div>
<div style="position:absolute;left:46px;top:560px;width:0;height:20px;border-left:1px dotted #c4c2a6"></div>
<div style="position:absolute;left:93px;top:560px;width:0;height:20px;border-left:1px dotted #c4c2a6"></div>
<div style="position:absolute;left:140px;top:560px;width:0;height:20px;border-left:1px dotted #c4c2a6"></div>
<div style="position:absolute;left:187px;top:560px;width:0;height:20px;border-left:1px dotted #c4c2a6"></div>
<div style="position:absolute;left:234px;top:560px;width:0;height:20px;border-left:1px dotted #c4c2a6"></div>
<div style="position:absolute;left:281px;top:560px;width:0;height:20px;border-left:1px dotted #c4c2a6"></div>
<div style="position:absolute;left:328px;top:560px;width:0;height:20px;border-left:1px dotted #c4c2a6"></div>
<div style="position:absolute;left:375px;top:560px;width:0;height:20px;border-left:1px dotted #c4c2a6"></div>
<div style="position:absolute;left:422px;top:560px;width:0;height:20px;border-left:1px dotted #c4c2a6"></div>
<div style="position:absolute;left:470px;top:560px;width:0;height:20px;border-left:1px dotted #c4c2a6"></div>
<div style="position:absolute;left:470.5px;width:43.200000000000045px;text-align:right;top:566.27px;font-size:10px;line-height:10px;color:#5b5b45;white-space:nowrap">06:47</div>
<div style="position:absolute;left:517px;top:560px;width:0;height:20px;border-left:1px dotted #c4c2a6"></div>
<div style="position:absolute;left:564px;top:560px;width:0;height:20px;border-left:1px dotted #c4c2a6"></div>
<div style="position:absolute;left:620px;top:560px;width:0;height:20px;border-left:1px dotted #c4c2a6"></div>
<div style="position:absolute;left:667px;top:560px;width:0;height:20px;border-left:1px dotted #c4c2a6"></div>
<div style="position:absolute;left:776px;top:560px;width:0;height:20px;border-left:1px dotted #c4c2a6"></div>
<div style="position:absolute;z-index:1;left:0;top:580px;width:900px;height:0;border-top:1px dotted #c4c2a6"></div>
<div style="position:absolute;left:0;top:580px;width:900px;height:20px;background:#ffffff"></div>
<div style="position:absolute;left:4px;top:586.09px;font-size:10px;line-height:10px;color:#555555;white-space:nowrap">24. po</div>
<div style="position:absolute;left:46px;top:580px;width:0;height:20px;border-left:1px dotted #c6c6c6"></div>
<div style="position:absolute;left:47px;width:43px;text-align:right;top:586.09px;font-size:10px;line-height:10px;color:#555555;white-space:nowrap">08:00</div>
<div style="position:absolute;left:93px;top:580px;width:0;height:20px;border-left:1px dotted #c6c6c6"></div>
<div style="position:absolute;left:94px;width:43px;text-align:right;top:586.09px;font-size:10px;line-height:10px;color:#555555;white-space:nowrap">17:00</div>
<div style="position:absolute;left:140px;top:580px;width:0;height:20px;border-left:1px dotted #c6c6c6"></div>
<div style="position:absolute;left:141px;width:43px;text-align:right;top:586.09px;font-size:10px;line-height:10px;color:#555555;white-space:nowrap">09:00</div>
<div style="position:absolute;left:187px;top:580px;width:0;height:20px;border-left:1px dotted #c6c6c6"></div>
<div style="position:absolute;left:188px;width:42.5px;text-align:right;top:586.09px;font-size:10px;line-height:10px;color:#555555;white-space:nowrap">08:00</div>
<div style="position:absolute;left:234px;top:580px;width:0;height:20px;border-left:1px dotted #c6c6c6"></div>
<div style="position:absolute;left:234.5px;width:47.0px;text-align:center;top:586.09px;font-size:10px;line-height:10px;color:#555555;white-space:nowrap">1.</div>
<div style="position:absolute;left:281px;top:580px;width:0;height:20px;border-left:1px dotted #c6c6c6"></div>
<div style="position:absolute;left:328px;top:580px;width:0;height:20px;border-left:1px dotted #c6c6c6"></div>
<div style="position:absolute;left:329px;width:47px;text-align:center;top:586.09px;font-size:10px;line-height:10px;color:#555555;white-space:nowrap">1</div>
<div style="position:absolute;left:375px;top:580px;width:0;height:20px;border-left:1px dotted #c6c6c6"></div>
<div style="position:absolute;left:376px;width:43px;text-align:right;top:586.09px;font-size:10px;line-height:10px;color:#555555;white-space:nowrap">01:00</div>
<div style="position:absolute;left:422px;top:580px;width:0;height:20px;border-left:1px dotted #c6c6c6"></div>
<div style="position:absolute;left:423px;width:43.5px;text-align:right;top:586.09px;font-size:10px;line-height:10px;color:#555555;white-space:nowrap">00:30</div>
<div style="position:absolute;left:470px;top:580px;width:0;height:20px;border-left:1px dotted #c6c6c6"></div>
<div style="position:absolute;left:470.5px;width:43.200000000000045px;text-align:right;top:586.09px;font-size:10px;line-height:10px;color:#555555;white-space:nowrap">07:17</div>
<div style="position:absolute;left:517px;top:580px;width:0;height:20px;border-left:1px dotted #c6c6c6"></div>
<div style="position:absolute;left:564px;top:580px;width:0;height:20px;border-left:1px dotted #c6c6c6"></div>
<div style="position:absolute;left:620px;top:580px;width:0;height:20px;border-left:1px dotted #c6c6c6"></div>
<div style="position:absolute;left:667px;top:580px;width:0;height:20px;border-left:1px dotted #c6c6c6"></div>
<div style="position:absolute;left:671.3px;top:586.09px;font-size:10px;line-height:10px;color:#555555;white-space:nowrap">M [O 01:00]</div>
<div style="position:absolute;left:776px;top:580px;width:0;height:20px;border-left:1px dotted #c6c6c6"></div>
<div style="position:absolute;z-index:1;left:0;top:600px;width:900px;height:0;border-top:1px dotted #c6c6c6"></div>
<div style="position:absolute;left:0;top:600px;width:900px;height:20px;background:#ffffff"></div>
<div style="position:absolute;left:4px;top:605.91px;font-size:10px;line-height:10px;color:#555555;white-space:nowrap">25. ut</div>
<div style="position:absolute;left:46px;top:600px;width:0;height:20px;border-left:1px dotted #c6c6c6"></div>
<div style="position:absolute;left:47px;width:43px;text-align:right;top:605.91px;font-size:10px;line-height:10px;color:#555555;white-space:nowrap">08:00</div>
<div style="position:absolute;left:93px;top:600px;width:0;height:20px;border-left:1px dotted #c6c6c6"></div>
<div style="position:absolute;left:94px;width:43px;text-align:right;top:605.91px;font-size:10px;line-height:10px;color:#555555;white-space:nowrap">17:00</div>
<div style="position:absolute;left:140px;top:600px;width:0;height:20px;border-left:1px dotted #c6c6c6"></div>
<div style="position:absolute;left:141px;width:43px;text-align:right;top:605.91px;font-size:10px;line-height:10px;color:#555555;white-space:nowrap">09:00</div>
<div style="position:absolute;left:187px;top:600px;width:0;height:20px;border-left:1px dotted #c6c6c6"></div>
<div style="position:absolute;left:188px;width:42.5px;text-align:right;top:605.91px;font-size:10px;line-height:10px;color:#555555;white-space:nowrap">08:00</div>
<div style="position:absolute;left:234px;top:600px;width:0;height:20px;border-left:1px dotted #c6c6c6"></div>
<div style="position:absolute;left:234.5px;width:47.0px;text-align:center;top:605.91px;font-size:10px;line-height:10px;color:#555555;white-space:nowrap">1.</div>
<div style="position:absolute;left:281px;top:600px;width:0;height:20px;border-left:1px dotted #c6c6c6"></div>
<div style="position:absolute;left:328px;top:600px;width:0;height:20px;border-left:1px dotted #c6c6c6"></div>
<div style="position:absolute;left:329px;width:47px;text-align:center;top:605.91px;font-size:10px;line-height:10px;color:#555555;white-space:nowrap">1</div>
<div style="position:absolute;left:375px;top:600px;width:0;height:20px;border-left:1px dotted #c6c6c6"></div>
<div style="position:absolute;left:376px;width:43px;text-align:right;top:605.91px;font-size:10px;line-height:10px;color:#555555;white-space:nowrap">01:00</div>
<div style="position:absolute;left:422px;top:600px;width:0;height:20px;border-left:1px dotted #c6c6c6"></div>
<div style="position:absolute;left:423px;width:43.5px;text-align:right;top:605.91px;font-size:10px;line-height:10px;color:#555555;white-space:nowrap">00:30</div>
<div style="position:absolute;left:470px;top:600px;width:0;height:20px;border-left:1px dotted #c6c6c6"></div>
<div style="position:absolute;left:470.5px;width:43.200000000000045px;text-align:right;top:605.91px;font-size:10px;line-height:10px;color:#555555;white-space:nowrap">07:47</div>
<div style="position:absolute;left:517px;top:600px;width:0;height:20px;border-left:1px dotted #c6c6c6"></div>
<div style="position:absolute;left:564px;top:600px;width:0;height:20px;border-left:1px dotted #c6c6c6"></div>
<div style="position:absolute;left:620px;top:600px;width:0;height:20px;border-left:1px dotted #c6c6c6"></div>
<div style="position:absolute;left:667px;top:600px;width:0;height:20px;border-left:1px dotted #c6c6c6"></div>
<div style="position:absolute;left:671.3px;top:605.91px;font-size:10px;line-height:10px;color:#555555;white-space:nowrap">M [O 01:00]</div>
<div style="position:absolute;left:776px;top:600px;width:0;height:20px;border-left:1px dotted #c6c6c6"></div>
<div style="position:absolute;z-index:1;left:0;top:620px;width:900px;height:0;border-top:1px dotted #f3c79a"></div>
<div style="position:absolute;left:0;top:620px;width:900px;height:20px;background:#d56a0c"></div>
<div style="position:absolute;left:4px;top:625.73px;font-size:10px;line-height:10px;color:#fff4e6;white-space:nowrap">26. st</div>
<div style="position:absolute;left:46px;top:620px;width:0;height:20px;border-left:1px dotted #f3c79a"></div>
<div style="position:absolute;left:47px;width:43px;text-align:right;top:625.73px;font-size:10px;line-height:10px;color:#fff4e6;white-space:nowrap">08:00</div>
<div style="position:absolute;left:93px;top:620px;width:0;height:20px;border-left:1px dotted #f3c79a"></div>
<div style="position:absolute;left:94px;width:43px;text-align:right;top:625.73px;font-size:10px;line-height:10px;color:#fff4e6;white-space:nowrap">17:00</div>
<div style="position:absolute;left:140px;top:620px;width:0;height:20px;border-left:1px dotted #f3c79a"></div>
<div style="position:absolute;left:141px;width:43px;text-align:right;top:625.73px;font-size:10px;line-height:10px;color:#fff4e6;white-space:nowrap">10:17</div>
<div style="position:absolute;left:187px;top:620px;width:0;height:20px;border-left:1px dotted #f3c79a"></div>
<div style="position:absolute;left:188px;width:42.5px;text-align:right;top:625.73px;font-size:10px;line-height:10px;color:#fff4e6;white-space:nowrap">08:00</div>
<div style="position:absolute;left:234px;top:620px;width:0;height:20px;border-left:1px dotted #f3c79a"></div>
<div style="position:absolute;left:234.5px;width:47.0px;text-align:center;top:625.73px;font-size:10px;line-height:10px;color:#fff4e6;white-space:nowrap">1.</div>
<div style="position:absolute;left:281px;top:620px;width:0;height:20px;border-left:1px dotted #f3c79a"></div>
<div style="position:absolute;left:328px;top:620px;width:0;height:20px;border-left:1px dotted #f3c79a"></div>
<div style="position:absolute;left:329px;width:47px;text-align:center;top:625.73px;font-size:10px;line-height:10px;color:#fff4e6;white-space:nowrap">1</div>
<div style="position:absolute;left:375px;top:620px;width:0;height:20px;border-left:1px dotted #f3c79a"></div>
<div style="position:absolute;left:376px;width:43px;text-align:right;top:625.73px;font-size:10px;line-height:10px;color:#fff4e6;white-space:nowrap">01:00</div>
<div style="position:absolute;left:422px;top:620px;width:0;height:20px;border-left:1px dotted #f3c79a"></div>
<div style="position:absolute;left:423px;width:43.5px;text-align:right;top:625.73px;font-size:10px;line-height:10px;color:#fff4e6;white-space:nowrap">00:30</div>
<div style="position:absolute;left:470px;top:620px;width:0;height:20px;border-left:1px dotted #f3c79a"></div>
<div style="position:absolute;left:470.5px;width:43.200000000000045px;text-align:right;top:625.73px;font-size:10px;line-height:10px;color:#fff4e6;white-space:nowrap">08:17</div>
<div style="position:absolute;left:517px;top:620px;width:0;height:20px;border-left:1px dotted #f3c79a"></div>
<div style="position:absolute;left:564px;top:620px;width:0;height:20px;border-left:1px dotted #f3c79a"></div>
<div style="position:absolute;left:620px;top:620px;width:0;height:20px;border-left:1px dotted #f3c79a"></div>
<div style="position:absolute;left:667px;top:620px;width:0;height:20px;border-left:1px dotted #f3c79a"></div>
<div style="position:absolute;left:671.3px;top:625.73px;font-size:10px;line-height:10px;color:#fff4e6;white-space:nowrap">M [O 01:00] [! 01:17]</div>
<div style="position:absolute;left:776px;top:620px;width:0;height:20px;border-left:1px dotted #f3c79a"></div>
<div style="position:absolute;z-index:1;left:0;top:640px;width:900px;height:0;border-top:1px dotted #f3c79a"></div>
<div style="position:absolute;left:0;top:640px;width:900px;height:19px;background:#ffffff"></div>
<div style="position:absolute;left:4px;top:645.55px;font-size:10px;line-height:10px;color:#555555;white-space:nowrap">27. št</div>
<div style="position:absolute;left:46px;top:640px;width:0;height:19px;border-left:1px dotted #c6c6c6"></div>
<div style="position:absolute;left:47px;width:43px;text-align:right;top:645.55px;font-size:10px;line-height:10px;color:#555555;white-space:nowrap">08:00</div>
<div style="position:absolute;left:93px;top:640px;width:0;height:19px;border-left:1px dotted #c6c6c6"></div>
<div style="position:absolute;left:94px;width:43px;text-align:right;top:645.55px;font-size:10px;line-height:10px;color:#555555;white-space:nowrap">17:00</div>
<div style="position:absolute;left:140px;top:640px;width:0;height:19px;border-left:1px dotted #c6c6c6"></div>
<div style="position:absolute;left:141px;width:43px;text-align:right;top:645.55px;font-size:10px;line-height:10px;color:#555555;white-space:nowrap">09:00</div>
<div style="position:absolute;left:187px;top:640px;width:0;height:19px;border-left:1px dotted #c6c6c6"></div>
<div style="position:absolute;left:188px;width:42.5px;text-align:right;top:645.55px;font-size:10px;line-height:10px;color:#555555;white-space:nowrap">08:00</div>
<div style="position:absolute;left:234px;top:640px;width:0;height:19px;border-left:1px dotted #c6c6c6"></div>
<div style="position:absolute;left:234.5px;width:47.0px;text-align:center;top:645.55px;font-size:10px;line-height:10px;color:#555555;white-space:nowrap">1.</div>
<div style="position:absolute;left:281px;top:640px;width:0;height:19px;border-left:1px dotted #c6c6c6"></div>
<div style="position:absolute;left:328px;top:640px;width:0;height:19px;border-left:1px dotted #c6c6c6"></div>
<div style="position:absolute;left:329px;width:47px;text-align:center;top:645.55px;font-size:10px;line-height:10px;color:#555555;white-space:nowrap">1</div>
<div style="position:absolute;left:375px;top:640px;width:0;height:19px;border-left:1px dotted #c6c6c6"></div>
<div style="position:absolute;left:376px;width:43px;text-align:right;top:645.55px;font-size:10px;line-height:10px;color:#555555;white-space:nowrap">01:00</div>
<div style="position:absolute;left:422px;top:640px;width:0;height:19px;border-left:1px dotted #c6c6c6"></div>
<div style="position:absolute;left:423px;width:43.5px;text-align:right;top:645.55px;font-size:10px;line-height:10px;color:#555555;white-space:nowrap">00:30</div>
<div style="position:absolute;left:470px;top:640px;width:0;height:19px;border-left:1px dotted #c6c6c6"></div>
<div style="position:absolute;left:470.5px;width:43.200000000000045px;text-align:right;top:645.55px;font-size:10px;line-height:10px;color:#555555;white-space:nowrap">08:47</div>
<div style="position:absolute;left:517px;top:640px;width:0;height:19px;border-left:1px dotted #c6c6c6"></div>
<div style="position:absolute;left:564px;top:640px;width:0;height:19px;border-left:1px dotted #c6c6c6"></div>
<div style="position:absolute;left:620px;top:640px;width:0;height:19px;border-left:1px dotted #c6c6c6"></div>
<div style="position:absolute;left:667px;top:640px;width:0;height:19px;border-left:1px dotted #c6c6c6"></div>
<div style="position:absolute;left:671.3px;top:645.55px;font-size:10px;line-height:10px;color:#555555;white-space:nowrap">M [O 01:00]</div>
<div style="position:absolute;left:776px;top:640px;width:0;height:19px;border-left:1px dotted #c6c6c6"></div>
<div style="position:absolute;z-index:1;left:0;top:659px;width:900px;height:0;border-top:1px dotted #a9e2f3"></div>
<div style="position:absolute;left:0;top:659px;width:900px;height:20px;background:#0caad8"></div>
<div style="position:absolute;left:4px;top:665.37px;font-size:10px;line-height:10px;color:#eafaff;white-space:nowrap">28. pi</div>
<div style="position:absolute;left:46px;top:659px;width:0;height:20px;border-left:1px dotted #a9e2f3"></div>
<div style="position:absolute;left:47px;width:43px;text-align:right;top:665.37px;font-size:10px;line-height:10px;color:#eafaff;white-space:nowrap">08:00</div>
<div style="position:absolute;left:93px;top:659px;width:0;height:20px;border-left:1px dotted #a9e2f3"></div>
<div style="position:absolute;left:94px;width:43px;text-align:right;top:665.37px;font-size:10px;line-height:10px;color:#eafaff;white-space:nowrap">17:00</div>
<div style="position:absolute;left:140px;top:659px;width:0;height:20px;border-left:1px dotted #a9e2f3"></div>
<div style="position:absolute;left:141px;width:43px;text-align:right;top:665.37px;font-size:10px;line-height:10px;color:#eafaff;white-space:nowrap">09:00</div>
<div style="position:absolute;left:187px;top:659px;width:0;height:20px;border-left:1px dotted #a9e2f3"></div>
<div style="position:absolute;left:188px;width:42.5px;text-align:right;top:665.37px;font-size:10px;line-height:10px;color:#eafaff;white-space:nowrap">08:00</div>
<div style="position:absolute;left:234px;top:659px;width:0;height:20px;border-left:1px dotted #a9e2f3"></div>
<div style="position:absolute;left:234.5px;width:47.0px;text-align:center;top:665.37px;font-size:10px;line-height:10px;color:#eafaff;white-space:nowrap">1.</div>
<div style="position:absolute;left:281px;top:659px;width:0;height:20px;border-left:1px dotted #a9e2f3"></div>
<div style="position:absolute;left:328px;top:659px;width:0;height:20px;border-left:1px dotted #a9e2f3"></div>
<div style="position:absolute;left:329px;width:47px;text-align:center;top:665.37px;font-size:10px;line-height:10px;color:#eafaff;white-space:nowrap">1</div>
<div style="position:absolute;left:375px;top:659px;width:0;height:20px;border-left:1px dotted #a9e2f3"></div>
<div style="position:absolute;left:376px;width:43px;text-align:right;top:665.37px;font-size:10px;line-height:10px;color:#eafaff;white-space:nowrap">01:00</div>
<div style="position:absolute;left:422px;top:659px;width:0;height:20px;border-left:1px dotted #a9e2f3"></div>
<div style="position:absolute;left:423px;width:43.5px;text-align:right;top:665.37px;font-size:10px;line-height:10px;color:#eafaff;white-space:nowrap">00:30</div>
<div style="position:absolute;left:470px;top:659px;width:0;height:20px;border-left:1px dotted #a9e2f3"></div>
<div style="position:absolute;left:470.5px;width:43.200000000000045px;text-align:right;top:665.37px;font-size:10px;line-height:10px;color:#eafaff;white-space:nowrap">09:17</div>
<div style="position:absolute;left:517px;top:659px;width:0;height:20px;border-left:1px dotted #a9e2f3"></div>
<div style="position:absolute;left:564px;top:659px;width:0;height:20px;border-left:1px dotted #a9e2f3"></div>
<div style="position:absolute;left:620px;top:659px;width:0;height:20px;border-left:1px dotted #a9e2f3"></div>
<div style="position:absolute;left:667px;top:659px;width:0;height:20px;border-left:1px dotted #a9e2f3"></div>
<div style="position:absolute;left:671.3px;top:665.37px;font-size:10px;line-height:10px;color:#eafaff;white-space:nowrap">M [O 01:00]</div>
<div style="position:absolute;left:776px;top:659px;width:0;height:20px;border-left:1px dotted #a9e2f3"></div>
<div style="position:absolute;z-index:1;left:0;top:679px;width:900px;height:0;border-top:1px dotted #a9e2f3"></div>
<div style="position:absolute;left:188px;top:659px;width:45.5px;height:19px;border:1px dotted #245a6e;box-sizing:border-box"></div>
</div>
<svg style="position:absolute;left:142px;top:717px" width="4" height="6"><path d="M3.5 0.5 L3.5 5.5 L0.5 3 Z" fill="#222"/></svg>
<div style="position:absolute;left:149.5px;top:714px;width:1px;height:12px;background:#9a9a9a"></div>
<div style="position:absolute;left:157px;top:716.5px;width:729px;height:9px;background:#444;border-radius:4.5px"></div>
<svg style="position:absolute;left:945px;top:717px" width="4" height="6"><path d="M0.5 0.5 L0.5 5.5 L3.5 3 Z" fill="#222"/></svg>
<div style="position:absolute;left:951px;top:713px;width:1px;height:13px;background:#9a9a9a"></div>
<div style="position:absolute;left:139px;top:731px;width:818px;height:38px;background:#e3e3e3"></div>
<div style="position:absolute;left:139px;top:735px;width:818px;height:26px;background:#fff"></div>
<div style="position:absolute;left:142px;top:741px;width:16.5px;height:16.5px;background:#9c3c3c;box-sizing:border-box;"></div>
<div style="position:absolute;top:744.83px;font-size:10px;line-height:10px;color:#666;white-space:nowrap;left:164px;">Neukončený deň</div>
<div style="position:absolute;left:248px;top:741px;width:16.5px;height:16.5px;background:#d6690e;box-sizing:border-box;"></div>
<div style="position:absolute;top:744.83px;font-size:10px;line-height:10px;color:#666;white-space:nowrap;left:269px;">Odporúčaná kontrola</div>
<div style="position:absolute;left:372.5px;top:741px;width:16.5px;height:16.5px;background:#cde9f8;box-sizing:border-box;border:1px solid #cfe0ea;"></div>
<div style="position:absolute;top:744.83px;font-size:10px;line-height:10px;color:#666;white-space:nowrap;left:394.7px;">Skontrolované</div>
<div style="position:absolute;left:466.6px;top:741px;width:16.5px;height:16.5px;background:#fefbd0;box-sizing:border-box;border:1px solid #e6e2c0;"></div>
<div style="position:absolute;top:744.83px;font-size:10px;line-height:10px;color:#666;white-space:nowrap;left:488.5px;">Voľno</div>
<div style="position:absolute;left:522px;top:741px;width:16.5px;height:16.5px;background:#cdf3c8;box-sizing:border-box;border:1px solid #c5e6c0;"></div>
<div style="position:absolute;top:744.83px;font-size:10px;line-height:10px;color:#666;white-space:nowrap;left:543px;">Sviatok</div>
<div style="position:absolute;left:584px;top:741px;width:16.5px;height:16.5px;background:#868686;box-sizing:border-box;"></div>
<div style="position:absolute;top:744.83px;font-size:10px;line-height:10px;color:#666;white-space:nowrap;left:605.4px;">Manuálna úprava</div>
<div style="position:absolute;left:692px;top:741px;width:16.5px;height:16.5px;background:#2f7f9f;box-sizing:border-box;"></div>
<div style="position:absolute;top:744.83px;font-size:10px;line-height:10px;color:#666;white-space:nowrap;left:713.2px;">Neprepočítaný deň</div>
<div style="position:absolute;left:806.3px;top:741px;width:16.5px;height:16.5px;background:#0caad8;box-sizing:border-box;"></div>
<div style="position:absolute;top:744.83px;font-size:10px;line-height:10px;color:#666;white-space:nowrap;left:827.6px;">Označený deň</div>
<svg style="position:absolute;left:941px;top:738px" width="12" height="23" viewBox="0 0 12 23"><path d="M3.5 7 L6 4 L8.5 7 Z" fill="#222"/><path d="M0 11.3 L11 11.3 L11 0" fill="none" stroke="#aaa" stroke-width="1"/><path d="M3.5 15 L6 18 L8.5 15 Z" fill="#222"/><path d="M0 22.3 L11 22.3 L11 12" fill="none" stroke="#aaa" stroke-width="1"/></svg>
<div style="position:absolute;left:0px;top:770px;width:1316px;height:24px;background:linear-gradient(to bottom,#d4d4d4 0%,#e6e6e6 20%,#e3e3e3 100%)"></div>
<div style="position:absolute;top:778.80px;font-size:8.5px;line-height:8.5px;color:#333;white-space:nowrap;left:1026px;">admin</div>
<svg style="position:absolute;left:1066px;top:779px" width="10" height="10" viewBox="0 0 10 10"><rect x="0" y="0" width="10" height="4.2" fill="#3ec43e"/><rect x="0" y="5.4" width="10" height="4.6" fill="#3ec43e"/><rect x="1.2" y="1.3" width="1.8" height="1.6" fill="#dff5df"/><rect x="1.2" y="6.9" width="1.8" height="1.6" fill="#dff5df"/></svg>
<div style="position:absolute;top:779.06px;font-size:8.2px;line-height:8.2px;color:#333;white-space:nowrap;left:1087px;">Podpora a aktualizácie programu sú aktívne</div>
<svg style="position:absolute;left:1304px;top:783px" width="10" height="10"><g fill="#bbb"><rect x="7" y="7" width="1" height="1"/><rect x="4" y="7" width="1" height="1"/><rect x="7" y="4" width="1" height="1"/><rect x="1" y="7" width="1" height="1"/><rect x="4" y="4" width="1" height="1"/><rect x="7" y="1" width="1" height="1"/></g></svg>
<div style="position:absolute;left:968px;top:734px;width:117px;height:26.5px;background:#3d3c3c;border-radius:2px"></div>
<svg style="position:absolute;left:985px;top:741px" width="12" height="12"><path d="M6 0.5 L6 11.5 M0.5 6 L11.5 6" stroke="#fff" stroke-width="1.6"/></svg>
<div style="position:absolute;top:744.06px;font-size:8.2px;line-height:8.2px;color:#f2f2f2;white-space:nowrap;left:1000px;">Hromadný zápis</div>
<div style="position:absolute;left:1205px;top:734px;width:93.5px;height:26.5px;background:#3d3c3c;border-radius:2px"></div>
<svg style="position:absolute;left:1214px;top:740px" width="12" height="13" viewBox="0 0 12 13"><circle cx="4.8" cy="4.8" r="3.6" fill="none" stroke="#fff" stroke-width="1.6"/><path d="M7.4 7.6 L11 11.4" stroke="#fff" stroke-width="2"/></svg>
<div style="position:absolute;top:744.06px;font-size:8.2px;line-height:8.2px;color:#f2f2f2;white-space:nowrap;left:1245px;">Detail dňa</div>
<div style="position:absolute;left:966px;top:51px;width:335px;height:671px;background:#fff"></div>
<div style="position:absolute;left:966px;top:51px;width:335px;height:5.5px;background:#e4dfe3"></div>
<div style="position:absolute;top:63.61px;font-size:10.5px;line-height:10.5px;color:#333;white-space:nowrap;left:974px;">Týždenný pracovný fond:</div>
<div style="position:absolute;top:63.61px;font-size:10.5px;line-height:10.5px;color:#333;white-space:nowrap;left:1100px;">37:30</div>
<div style="position:absolute;top:83.11px;font-size:10.5px;line-height:10.5px;color:#333;white-space:nowrap;left:974px;">Mesačný pracovný fond:</div>
<div style="position:absolute;top:83.11px;font-size:10.5px;line-height:10.5px;color:#333;white-space:nowrap;left:1100px;">150:00</div>
<div style="position:absolute;top:83.11px;font-size:10.5px;line-height:10.5px;color:#333;white-space:nowrap;left:1150px;">Stravných lístkov:</div>
<div style="position:absolute;top:83.11px;font-size:10.5px;line-height:10.5px;color:#333;white-space:nowrap;right:35px;">18</div>
<div style="position:absolute;top:103.11px;font-size:10.5px;line-height:10.5px;color:#333;white-space:nowrap;left:974px;">Pracovných dní:</div>
<div style="position:absolute;top:103.11px;font-size:10.5px;line-height:10.5px;color:#333;white-space:nowrap;left:1053.5px;">20</div>
<div style="position:absolute;top:103.11px;font-size:10.5px;line-height:10.5px;color:#333;white-space:nowrap;right:35px;">Sviatkov:&nbsp; 0</div>
<div style="position:absolute;left:974px;top:121.5px;width:307px;height:1px;background:#d0d0d0"></div>
<div style="position:absolute;left:974px;top:137px;width:307px;height:79px;border:1px solid #dcdcdc;box-sizing:border-box"></div>
<div style="position:absolute;left:978px;top:132px;width:150px;height:12px;background:#fff"></div>
<div style="position:absolute;top:133.11px;font-size:10.5px;line-height:10.5px;color:#333;white-space:nowrap;left:982px;">Referenčné (zmluvné) hodnoty</div>
<div style="position:absolute;top:157.11px;font-size:10.5px;line-height:10.5px;color:#333;white-space:nowrap;left:983px;">Pracovných dní:</div>
<div style="position:absolute;top:157.11px;font-size:10.5px;line-height:10.5px;color:#333;white-space:nowrap;left:1063.5px;">20</div>
<div style="position:absolute;top:157.11px;font-size:10.5px;line-height:10.5px;color:#333;white-space:nowrap;right:45px;">Sviatkov:&nbsp; 0</div>
<div style="position:absolute;top:177.61px;font-size:10.5px;line-height:10.5px;color:#333;white-space:nowrap;left:983px;">Týždenný pracovný fond:</div>
<div style="position:absolute;top:177.61px;font-size:10.5px;line-height:10.5px;color:#333;white-space:nowrap;right:45px;">37:30</div>
<div style="position:absolute;top:197.11px;font-size:10.5px;line-height:10.5px;color:#333;white-space:nowrap;left:983px;">Mesačný pracovný fond:</div>
<div style="position:absolute;top:197.11px;font-size:10.5px;line-height:10.5px;color:#333;white-space:nowrap;right:45px;">150:00</div>
<div style="position:absolute;top:225.11px;font-size:10.5px;line-height:10.5px;color:#333;white-space:nowrap;left:974px;">Plánované saldo:</div>
<div style="position:absolute;top:225.11px;font-size:10.5px;line-height:10.5px;color:#333;white-space:nowrap;right:35px;">00:00</div>
<div style="position:absolute;left:973px;top:245.6px;width:308.29999999999995px;height:35.50000000000003px;overflow:hidden">
<div style="position:absolute;left:0px;top:0px;width:308.29999999999995px;height:13.500000000000028px;background:linear-gradient(to bottom,#3c3c3c 0%,#585858 50%,#4a4a4a 75%,#3e3e3e 100%)"></div>
<div style="position:absolute;left:0px;top:0;width:56.299999999999955px;height:13.500000000000028px;line-height:13.500000000000028px;text-align:center;font-size:10.2px;color:#e2e2e2;white-space:nowrap;overflow:hidden">Prenesené</div>
<div style="position:absolute;left:55.799999999999955px;top:1px;width:1px;height:11.500000000000028px;background:#777;opacity:0.4"></div>
<div style="position:absolute;left:56.299999999999955px;top:0;width:46.200000000000045px;height:13.500000000000028px;line-height:13.500000000000028px;text-align:center;font-size:10.2px;color:#e2e2e2;white-space:nowrap;overflow:hidden">Aktuálne</div>
<div style="position:absolute;left:102.0px;top:1px;width:1px;height:11.500000000000028px;background:#777;opacity:0.4"></div>
<div style="position:absolute;left:102.5px;top:0;width:56.5px;height:13.500000000000028px;line-height:13.500000000000028px;text-align:center;font-size:10.2px;color:#e2e2e2;white-space:nowrap;overflow:hidden">Preplatené</div>
<div style="position:absolute;left:158.5px;top:1px;width:1px;height:11.500000000000028px;background:#777;opacity:0.4"></div>
<div style="position:absolute;left:159px;top:0;width:43.5px;height:13.500000000000028px;line-height:13.500000000000028px;text-align:center;font-size:10.2px;color:#e2e2e2;white-space:nowrap;overflow:hidden">Zrušené</div>
<div style="position:absolute;left:202.0px;top:1px;width:1px;height:11.500000000000028px;background:#777;opacity:0.4"></div>
<div style="position:absolute;left:202.5px;top:0;width:105.79999999999995px;height:13.500000000000028px;line-height:13.500000000000028px;text-align:center;font-size:10.2px;color:#e2e2e2;white-space:nowrap;overflow:hidden">Celkové</div>
<div style="position:absolute;left:0.0px;top:13.5px;width:55.3px;height:19.0px;border-left:1px dotted #c8c8c8;border-bottom:1px dotted #c8c8c8;"></div>
<div style="position:absolute;left:0px;width:52.299999999999955px;text-align:right;top:19.27px;font-size:10.2px;line-height:10.2px;color:#666;white-space:nowrap">00:00</div>
<div style="position:absolute;left:56.3px;top:13.5px;width:45.2px;height:19.0px;border-left:1px dotted #c8c8c8;border-bottom:1px dotted #c8c8c8;"></div>
<div style="position:absolute;left:56.299999999999955px;width:42.200000000000045px;text-align:right;top:19.27px;font-size:10.2px;line-height:10.2px;color:#666;white-space:nowrap">09:17</div>
<div style="position:absolute;left:102.5px;top:13.5px;width:55.5px;height:19.0px;border-left:1px dotted #c8c8c8;border-bottom:1px dotted #c8c8c8;"></div>
<div style="position:absolute;left:102.5px;width:52.5px;text-align:right;top:19.27px;font-size:10.2px;line-height:10.2px;color:#666;white-space:nowrap">00:00</div>
<div style="position:absolute;left:159.0px;top:13.5px;width:42.5px;height:19.0px;border-left:1px dotted #c8c8c8;border-bottom:1px dotted #c8c8c8;"></div>
<div style="position:absolute;left:159px;width:39.5px;text-align:right;top:19.27px;font-size:10.2px;line-height:10.2px;color:#666;white-space:nowrap">00:00</div>
<div style="position:absolute;left:202.5px;top:13.5px;width:104.8px;height:19.0px;border-left:1px dotted #c8c8c8;border-bottom:1px dotted #c8c8c8;border-right:1px dotted #c8c8c8;"></div>
<div style="position:absolute;left:202.5px;width:101.79999999999995px;text-align:right;top:19.27px;font-size:10.2px;line-height:10.2px;color:#666;white-space:nowrap">09:17</div>
</div>
<div style="position:absolute;top:289.61px;font-size:10.5px;line-height:10.5px;color:#333;white-space:nowrap;left:974px;">Konto pracovného času (KPČ)</div>
<div style="position:absolute;top:289.61px;font-size:10.5px;line-height:10.5px;color:#333;white-space:nowrap;right:35px;">Aktuálny stav:&nbsp; 00:00</div>
<div style="position:absolute;left:973px;top:307.6px;width:308.29999999999995px;height:36.09999999999995px;overflow:hidden">
<div style="position:absolute;left:0px;top:0px;width:321.5px;height:13.799999999999955px;background:linear-gradient(to bottom,#3c3c3c 0%,#585858 50%,#4a4a4a 75%,#3e3e3e 100%)"></div>
<div style="position:absolute;left:0px;top:0;width:53.700000000000045px;height:13.799999999999955px;line-height:13.799999999999955px;text-align:center;font-size:10.2px;color:#e2e2e2;white-space:nowrap;overflow:hidden">Prenos</div>
<div style="position:absolute;left:53.200000000000045px;top:1px;width:1px;height:11.799999999999955px;background:#777;opacity:0.4"></div>
<div style="position:absolute;left:53.700000000000045px;top:0;width:54.09999999999991px;height:13.799999999999955px;line-height:13.799999999999955px;text-align:center;font-size:10.2px;color:#e2e2e2;white-space:nowrap;overflow:hidden">Plnenie</div>
<div style="position:absolute;left:107.29999999999995px;top:1px;width:1px;height:11.799999999999955px;background:#777;opacity:0.4"></div>
<div style="position:absolute;left:107.79999999999995px;top:0;width:52.90000000000009px;height:13.799999999999955px;line-height:13.799999999999955px;text-align:center;font-size:10.2px;color:#e2e2e2;white-space:nowrap;overflow:hidden">Čerpanie</div>
<div style="position:absolute;left:160.20000000000005px;top:1px;width:1px;height:11.799999999999955px;background:#777;opacity:0.4"></div>
<div style="position:absolute;left:160.70000000000005px;top:0;width:53.59999999999991px;height:13.799999999999955px;line-height:13.799999999999955px;text-align:center;font-size:10.2px;color:#e2e2e2;white-space:nowrap;overflow:hidden">Rozdiel</div>
<div style="position:absolute;left:213.79999999999995px;top:1px;width:1px;height:11.799999999999955px;background:#777;opacity:0.4"></div>
<div style="position:absolute;left:214.29999999999995px;top:0;width:107.20000000000005px;height:13.799999999999955px;line-height:13.799999999999955px;text-align:center;font-size:10.2px;color:#e2e2e2;white-space:nowrap;overflow:hidden">Stav v mesiaci</div>
<div style="position:absolute;left:0.0px;top:13.8px;width:52.7px;height:19.3px;border-left:1px dotted #c8c8c8;border-bottom:1px dotted #c8c8c8;"></div>
<div style="position:absolute;left:0px;width:49.700000000000045px;text-align:right;top:19.72px;font-size:10.2px;line-height:10.2px;color:#666;white-space:nowrap">00:00</div>
<div style="position:absolute;left:53.7px;top:13.8px;width:53.1px;height:19.3px;border-left:1px dotted #c8c8c8;border-bottom:1px dotted #c8c8c8;"></div>
<div style="position:absolute;left:53.700000000000045px;width:50.09999999999991px;text-align:right;top:19.72px;font-size:10.2px;line-height:10.2px;color:#666;white-space:nowrap">00:00</div>
<div style="position:absolute;left:107.8px;top:13.8px;width:51.9px;height:19.3px;border-left:1px dotted #c8c8c8;border-bottom:1px dotted #c8c8c8;"></div>
<div style="position:absolute;left:107.79999999999995px;width:48.90000000000009px;text-align:right;top:19.72px;font-size:10.2px;line-height:10.2px;color:#666;white-space:nowrap">00:00</div>
<div style="position:absolute;left:160.7px;top:13.8px;width:52.6px;height:19.3px;border-left:1px dotted #c8c8c8;border-bottom:1px dotted #c8c8c8;"></div>
<div style="position:absolute;left:160.70000000000005px;width:49.59999999999991px;text-align:right;top:19.72px;font-size:10.2px;line-height:10.2px;color:#666;white-space:nowrap">00:00</div>
<div style="position:absolute;left:214.3px;top:13.8px;width:106.2px;height:19.3px;border-left:1px dotted #c8c8c8;border-bottom:1px dotted #c8c8c8;border-right:1px dotted #c8c8c8;"></div>
<div style="position:absolute;left:214.29999999999995px;width:103.20000000000005px;text-align:right;top:19.72px;font-size:10.2px;line-height:10.2px;color:#666;white-space:nowrap">00:00</div>
</div>
<div style="position:absolute;top:358.41px;font-size:10.5px;line-height:10.5px;color:#333;white-space:nowrap;left:974px;">Odpracovaný čas celkom:</div>
<div style="position:absolute;top:358.41px;font-size:10.5px;line-height:10.5px;color:#333;white-space:nowrap;right:35px;">144:17</div>
<div style="position:absolute;left:973px;top:383.2px;width:308.29999999999995px;height:174.3px;overflow:hidden">
<div style="position:absolute;left:0px;top:0px;width:308.29999999999995px;height:14.100000000000023px;background:linear-gradient(to bottom,#3c3c3c 0%,#585858 50%,#4a4a4a 75%,#3e3e3e 100%)"></div>
<div style="position:absolute;left:0px;top:0;width:98.40000000000009px;height:14.100000000000023px;line-height:14.100000000000023px;text-align:center;font-size:10.2px;color:#e2e2e2;white-space:nowrap;overflow:hidden"></div>
<div style="position:absolute;left:97.90000000000009px;top:1px;width:1px;height:12.100000000000023px;background:#777;opacity:0.4"></div>
<div style="position:absolute;left:98.40000000000009px;top:0;width:209.89999999999986px;height:14.100000000000023px;line-height:14.100000000000023px;text-align:center;font-size:10.2px;color:#e2e2e2;white-space:nowrap;overflow:hidden">Celkom</div>
<div style="position:absolute;left:0.0px;top:14.1px;width:97.4px;height:18.8px;border-left:1px dotted #c8c8c8;border-bottom:1px dotted #c8c8c8;"></div>
<div style="position:absolute;left:4px;top:19.75px;font-size:10.2px;line-height:10.2px;color:#666;white-space:nowrap">Pracovné dni</div>
<div style="position:absolute;left:98.4px;top:14.1px;width:208.9px;height:18.8px;border-left:1px dotted #c8c8c8;border-bottom:1px dotted #c8c8c8;border-right:1px dotted #c8c8c8;"></div>
<div style="position:absolute;left:98.40000000000009px;width:205.89999999999986px;text-align:right;top:19.75px;font-size:10.2px;line-height:10.2px;color:#666;white-space:nowrap">144:17</div>
<div style="position:absolute;left:0.0px;top:33.9px;width:97.4px;height:18.8px;border-left:1px dotted #c8c8c8;border-bottom:1px dotted #c8c8c8;"></div>
<div style="position:absolute;left:4px;top:39.53px;font-size:10.2px;line-height:10.2px;color:#666;white-space:nowrap">Nočná</div>
<div style="position:absolute;left:98.4px;top:33.9px;width:208.9px;height:18.8px;border-left:1px dotted #c8c8c8;border-bottom:1px dotted #c8c8c8;border-right:1px dotted #c8c8c8;"></div>
<div style="position:absolute;left:98.40000000000009px;width:205.89999999999986px;text-align:right;top:39.53px;font-size:10.2px;line-height:10.2px;color:#666;white-space:nowrap">00:00</div>
<div style="position:absolute;left:0.0px;top:53.7px;width:97.4px;height:18.8px;border-left:1px dotted #c8c8c8;border-bottom:1px dotted #c8c8c8;"></div>
<div style="position:absolute;left:4px;top:59.30px;font-size:10.2px;line-height:10.2px;color:#666;white-space:nowrap">Soboty</div>
<div style="position:absolute;left:98.4px;top:53.7px;width:208.9px;height:18.8px;border-left:1px dotted #c8c8c8;border-bottom:1px dotted #c8c8c8;border-right:1px dotted #c8c8c8;"></div>
<div style="position:absolute;left:98.40000000000009px;width:205.89999999999986px;text-align:right;top:59.30px;font-size:10.2px;line-height:10.2px;color:#666;white-space:nowrap">00:00</div>
<div style="position:absolute;left:0.0px;top:73.4px;width:97.4px;height:18.8px;border-left:1px dotted #c8c8c8;border-bottom:1px dotted #c8c8c8;"></div>
<div style="position:absolute;left:4px;top:79.08px;font-size:10.2px;line-height:10.2px;color:#666;white-space:nowrap">Nedele</div>
<div style="position:absolute;left:98.4px;top:73.4px;width:208.9px;height:18.8px;border-left:1px dotted #c8c8c8;border-bottom:1px dotted #c8c8c8;border-right:1px dotted #c8c8c8;"></div>
<div style="position:absolute;left:98.40000000000009px;width:205.89999999999986px;text-align:right;top:79.08px;font-size:10.2px;line-height:10.2px;color:#666;white-space:nowrap">00:00</div>
<div style="position:absolute;left:0.0px;top:93.2px;width:97.4px;height:18.8px;border-left:1px dotted #c8c8c8;border-bottom:1px dotted #c8c8c8;"></div>
<div style="position:absolute;left:4px;top:98.85px;font-size:10.2px;line-height:10.2px;color:#666;white-space:nowrap">Sviatky</div>
<div style="position:absolute;left:98.4px;top:93.2px;width:208.9px;height:18.8px;border-left:1px dotted #c8c8c8;border-bottom:1px dotted #c8c8c8;border-right:1px dotted #c8c8c8;"></div>
<div style="position:absolute;left:98.40000000000009px;width:205.89999999999986px;text-align:right;top:98.85px;font-size:10.2px;line-height:10.2px;color:#666;white-space:nowrap">00:00</div>
<div style="position:absolute;left:0.0px;top:113.0px;width:97.4px;height:18.8px;border-left:1px dotted #c8c8c8;border-bottom:1px dotted #c8c8c8;"></div>
<div style="position:absolute;left:4px;top:118.63px;font-size:10.2px;line-height:10.2px;color:#666;white-space:nowrap">Odpracované sviatky</div>
<div style="position:absolute;left:98.4px;top:113.0px;width:208.9px;height:18.8px;border-left:1px dotted #c8c8c8;border-bottom:1px dotted #c8c8c8;border-right:1px dotted #c8c8c8;"></div>
<div style="position:absolute;left:98.40000000000009px;width:205.89999999999986px;text-align:right;top:118.63px;font-size:10.2px;line-height:10.2px;color:#666;white-space:nowrap">00:00</div>
<div style="position:absolute;left:0.0px;top:132.8px;width:97.4px;height:18.8px;border-left:1px dotted #c8c8c8;border-bottom:1px dotted #c8c8c8;"></div>
<div style="position:absolute;left:4px;top:138.40px;font-size:10.2px;line-height:10.2px;color:#666;white-space:nowrap">Obed</div>
<div style="position:absolute;left:98.4px;top:132.8px;width:208.9px;height:18.8px;border-left:1px dotted #c8c8c8;border-bottom:1px dotted #c8c8c8;border-right:1px dotted #c8c8c8;"></div>
<div style="position:absolute;left:98.40000000000009px;width:205.89999999999986px;text-align:right;top:138.40px;font-size:10.2px;line-height:10.2px;color:#666;white-space:nowrap">17:00</div>
<div style="position:absolute;left:0.0px;top:152.5px;width:97.4px;height:18.8px;border-left:1px dotted #c8c8c8;border-bottom:1px dotted #c8c8c8;"></div>
<div style="position:absolute;left:4px;top:158.18px;font-size:10.2px;line-height:10.2px;color:#666;white-space:nowrap">Príplatkový čas</div>
<div style="position:absolute;left:98.4px;top:152.5px;width:208.9px;height:18.8px;border-left:1px dotted #c8c8c8;border-bottom:1px dotted #c8c8c8;border-right:1px dotted #c8c8c8;"></div>
<div style="position:absolute;left:98.40000000000009px;width:205.89999999999986px;text-align:right;top:158.18px;font-size:10.2px;line-height:10.2px;color:#666;white-space:nowrap">00:00</div>
</div>
<div style="position:absolute;top:558.11px;font-size:10.5px;line-height:10.5px;color:#333;white-space:nowrap;left:974px;">Sumár času prerušení:</div>
<div style="position:absolute;top:558.11px;font-size:10.5px;line-height:10.5px;color:#333;white-space:nowrap;left:1087px;">28:15</div>
<div style="position:absolute;left:973px;top:576px;width:308.29999999999995px;height:114.59999999999998px;overflow:hidden">
<div style="position:absolute;left:0px;top:0px;width:308.29999999999995px;height:13.399999999999977px;background:linear-gradient(to bottom,#3c3c3c 0%,#585858 50%,#4a4a4a 75%,#3e3e3e 100%)"></div>
<div style="position:absolute;left:0px;top:0;width:102.5px;height:13.399999999999977px;line-height:13.399999999999977px;text-align:center;font-size:10.2px;color:#e2e2e2;white-space:nowrap;overflow:hidden">Prerušenie</div>
<div style="position:absolute;left:102.0px;top:1px;width:1px;height:11.399999999999977px;background:#777;opacity:0.4"></div>
<div style="position:absolute;left:102.5px;top:0;width:205.79999999999995px;height:13.399999999999977px;line-height:13.399999999999977px;text-align:center;font-size:10.2px;color:#e2e2e2;white-space:nowrap;overflow:hidden">Celkový čas</div>
<div style="position:absolute;left:0.0px;top:13.4px;width:101.5px;height:18.8px;border-left:1px dotted #c8c8c8;border-bottom:1px dotted #c8c8c8;"></div>
<div style="position:absolute;left:4px;top:19.09px;font-size:10.2px;line-height:10.2px;color:#666;white-space:nowrap">Dovolenka</div>
<div style="position:absolute;left:102.5px;top:13.4px;width:204.8px;height:18.8px;border-left:1px dotted #c8c8c8;border-bottom:1px dotted #c8c8c8;border-right:1px dotted #c8c8c8;"></div>
<div style="position:absolute;left:102.5px;width:201.79999999999995px;text-align:right;top:19.09px;font-size:10.2px;line-height:10.2px;color:#666;white-space:nowrap">07:30</div>
<div style="position:absolute;left:0.0px;top:33.2px;width:101.5px;height:18.8px;border-left:1px dotted #c8c8c8;border-bottom:1px dotted #c8c8c8;"></div>
<div style="position:absolute;left:4px;top:38.93px;font-size:10.2px;line-height:10.2px;color:#666;white-space:nowrap">Služobná cesta</div>
<div style="position:absolute;left:102.5px;top:33.2px;width:204.8px;height:18.8px;border-left:1px dotted #c8c8c8;border-bottom:1px dotted #c8c8c8;border-right:1px dotted #c8c8c8;"></div>
<div style="position:absolute;left:102.5px;width:201.79999999999995px;text-align:right;top:38.93px;font-size:10.2px;line-height:10.2px;color:#666;white-space:nowrap">08:17</div>
<div style="position:absolute;left:0.0px;top:53.1px;width:101.5px;height:18.8px;border-left:1px dotted #c8c8c8;border-bottom:1px dotted #c8c8c8;"></div>
<div style="position:absolute;left:4px;top:58.77px;font-size:10.2px;line-height:10.2px;color:#666;white-space:nowrap">Služobne</div>
<div style="position:absolute;left:102.5px;top:53.1px;width:204.8px;height:18.8px;border-left:1px dotted #c8c8c8;border-bottom:1px dotted #c8c8c8;border-right:1px dotted #c8c8c8;"></div>
<div style="position:absolute;left:102.5px;width:201.79999999999995px;text-align:right;top:58.77px;font-size:10.2px;line-height:10.2px;color:#666;white-space:nowrap">02:36</div>
<div style="position:absolute;left:0.0px;top:72.9px;width:101.5px;height:18.8px;border-left:1px dotted #c8c8c8;border-bottom:1px dotted #c8c8c8;"></div>
<div style="position:absolute;left:4px;top:78.61px;font-size:10.2px;line-height:10.2px;color:#666;white-space:nowrap">Lekár</div>
<div style="position:absolute;left:102.5px;top:72.9px;width:204.8px;height:18.8px;border-left:1px dotted #c8c8c8;border-bottom:1px dotted #c8c8c8;border-right:1px dotted #c8c8c8;"></div>
<div style="position:absolute;left:102.5px;width:201.79999999999995px;text-align:right;top:78.61px;font-size:10.2px;line-height:10.2px;color:#666;white-space:nowrap">07:30</div>
<div style="position:absolute;left:0.0px;top:92.8px;width:101.5px;height:18.8px;border-left:1px dotted #c8c8c8;border-bottom:1px dotted #c8c8c8;"></div>
<div style="position:absolute;left:4px;top:98.45px;font-size:10.2px;line-height:10.2px;color:#666;white-space:nowrap">neuznané</div>
<div style="position:absolute;left:102.5px;top:92.8px;width:204.8px;height:18.8px;border-left:1px dotted #c8c8c8;border-bottom:1px dotted #c8c8c8;border-right:1px dotted #c8c8c8;"></div>
<div style="position:absolute;left:102.5px;width:201.79999999999995px;text-align:right;top:98.45px;font-size:10.2px;line-height:10.2px;color:#666;white-space:nowrap">02:22</div>
</div>
<div style="position:absolute;left:973px;top:713.7px;width:296px;height:5px;background:#606060"></div>
<div style="position:absolute;left:1280px;top:714px;width:1px;height:5px;background:#999"></div>
<svg style="position:absolute;left:1283px;top:59px" width="14" height="14"><path d="M0.5 12.5 L12.5 12.5 L12.5 1" fill="none" stroke="#555" stroke-width="1.2"/><path d="M4 7 L6 4.8 L8 7 Z" fill="#111"/></svg>
<div style="position:absolute;left:1285.5px;top:78px;width:9px;height:465px;background:#3f3f3f;border-radius:4.5px"></div>
<div style="position:absolute;left:1284px;top:700.5px;width:12px;height:5px;background:#e0e0e0"></div>
<svg style="position:absolute;left:1283px;top:705px" width="14" height="14"><path d="M0.5 12.8 L12.5 12.8 L12.5 1" fill="none" stroke="#555" stroke-width="1.2"/><path d="M4 5 L6 7.2 L8 5 Z" fill="#111"/></svg>
<div style="position:absolute;left:850px;top:792px;width:6px;height:2px;background:#111;z-index:70"></div>
<div style="position:absolute;left:850px;top:0px;width:6px;height:1.5px;background:#111;z-index:70"></div>
<div style="position:absolute;left:136px;top:3px;width:762px;height:38px;border:7px solid #22b14c;z-index:50"></div>
<div style="position:absolute;left:131px;top:99px;width:817px;height:578px;border:7px solid #22b14c;z-index:50"></div>
<div style="position:absolute;left:133px;top:726px;width:816px;height:34px;border:7px solid #22b14c;z-index:50"></div>
<div style="position:absolute;left:959px;top:45px;width:335px;height:670px;border:7px solid #22b14c;z-index:50"></div>
<div style="position:absolute;top:23.95px;font-size:20.5px;line-height:20.5px;color:#1f9e48;white-space:nowrap;font-weight:bold;left:918px;z-index:60;-webkit-text-stroke:0.5px #1f9e48">4</div>
<div style="position:absolute;top:214.85px;font-size:20.5px;line-height:20.5px;color:#1f9e48;white-space:nowrap;font-weight:bold;left:724px;z-index:60;-webkit-text-stroke:0.5px #1f9e48">1</div>
<div style="position:absolute;top:695.45px;font-size:20.5px;line-height:20.5px;color:#1f9e48;white-space:nowrap;font-weight:bold;left:160.5px;z-index:60;-webkit-text-stroke:0.5px #1f9e48">2</div>
<div style="position:absolute;top:434.25px;font-size:20.5px;line-height:20.5px;color:#1f9e48;white-space:nowrap;font-weight:bold;left:1118.5px;z-index:60;-webkit-text-stroke:0.5px #1f9e48">3</div>
</body></html>
